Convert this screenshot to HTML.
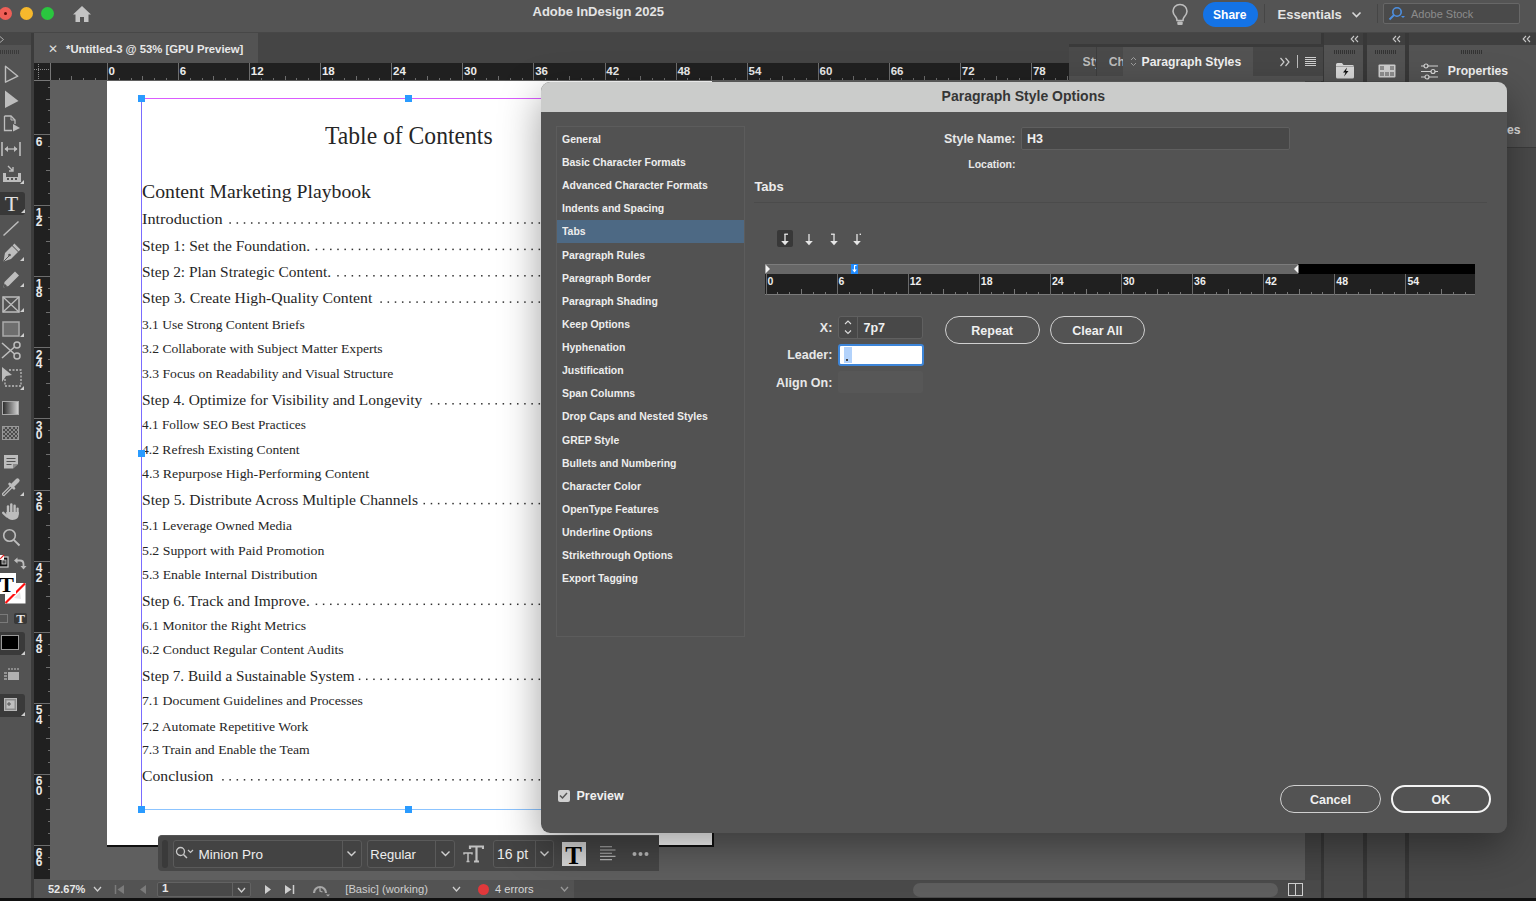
<!DOCTYPE html>
<html><head><meta charset="utf-8">
<style>
*{margin:0;padding:0;box-sizing:border-box}
html,body{width:1536px;height:901px;overflow:hidden;background:#545454;font-family:"Liberation Sans",sans-serif;color:#eee}
.a{position:absolute}
.t{position:absolute;white-space:nowrap;line-height:1}
.ui{font-family:"Liberation Sans",sans-serif}
.serif{font-family:"Liberation Serif",serif;color:#262626}
</style></head><body>
<!-- title bar -->
<div class="a" style="left:0;top:0;width:1536px;height:33px;background:#545454"></div>
<div class="a" style="left:-1px;top:7px;width:13px;height:13px;border-radius:50%;background:#ee5f57"></div>
<div class="a" style="left:4px;top:12px;width:3px;height:3px;border-radius:50%;background:#5a0a06"></div>
<div class="a" style="left:20px;top:7px;width:13px;height:13px;border-radius:50%;background:#f6b92c"></div>
<div class="a" style="left:41px;top:7px;width:13px;height:13px;border-radius:50%;background:#2ac63f"></div>
<svg class="a" style="left:72px;top:5px" width="20" height="18" viewBox="0 0 20 18"><path d="M10 1 L1 9.5 H3.5 V17 H8 V12 H12 V17 H16.5 V9.5 H19 Z" fill="#c4c4c4"/></svg>
<div class="t" style="left:532.5px;top:5.2px;font-size:13px;font-weight:bold;color:#e4e4e4">Adobe InDesign 2025</div>

<!-- tab row -->
<div class="a" style="left:0;top:32px;width:1536px;height:1px;background:#474747"></div>
<div class="a" style="left:0;top:33px;width:1536px;height:30px;background:#454545"></div>
<div class="a" style="left:34px;top:33px;width:224px;height:30px;background:#535353"></div>
<div class="t" style="left:47.5px;top:43px;font-size:12px;color:#ddd">&#x2715;</div>
<div class="t" style="left:66px;top:43.5px;font-size:11.3px;font-weight:bold;color:#e8e8e8">*Untitled-3 @ 53% [GPU Preview]</div>
<!-- left toolbar -->
<div class="a" style="left:0;top:33px;width:31px;height:868px;background:#535353"></div>
<div class="a" style="left:0;top:33px;width:31px;height:12px;background:#474747"></div>
<div class="a" style="left:31px;top:33px;width:3px;height:868px;background:#3c3c3c"></div>
<!-- pasteboard -->
<div class="a" style="left:50px;top:80px;width:1273px;height:800px;background:#5f5f5f"></div>
<!-- rulers -->
<div class="a" style="left:34px;top:63px;width:1035px;height:17px;background:#202020"></div>
<div class="a" style="left:34px;top:63px;width:16px;height:816px;background:#202020"></div>
<div class="a" style="left:50px;top:63px;width:1px;height:17px;background:#777"></div>
<div class="a" style="left:34px;top:80px;width:16px;height:1px;background:#777"></div>
<!-- tools -->
<svg class="a" style="left:0px;top:36px" width="6" height="7" viewBox="0 0 6 7"><path d="M0 0.5 L3.5 3.5 L0 6.5" stroke="#aaa" stroke-width="1" fill="none"/></svg>
<div class="a" style="left:0px;top:50px;width:20px;height:4px;background:repeating-linear-gradient(to right,#3a3a3a 0 1px,transparent 1px 2px)"></div>
<svg class="a" style="left:4px;top:65px" width="16" height="19" viewBox="0 0 16 19"><path d="M1.5 1.2 L13.8 11.2 L1.5 17.2 Z" stroke="#bdbdbd" stroke-width="1.4" fill="none" stroke-linejoin="round"/></svg>
<svg class="a" style="left:4px;top:90px" width="16" height="19" viewBox="0 0 16 19"><path d="M1 0.5 L14.5 11 L1 18 Z" fill="#bdbdbd"/></svg>
<svg class="a" style="left:3px;top:115px" width="18" height="17" viewBox="0 0 18 17"><path d="M1.5 1 H8 L12 5 V9 M1.5 1 V15.5 H9" stroke="#bdbdbd" stroke-width="1.3" fill="none"/><path d="M8 1 V5 H12" stroke="#bdbdbd" stroke-width="1" fill="none"/><path d="M10 9 L17 13 L10 16.5 Z" fill="#bdbdbd"/></svg>
<svg class="a" style="left:1px;top:141px" width="20" height="16" viewBox="0 0 20 16"><path d="M1 1 V15 M19 1 V15" stroke="#bdbdbd" stroke-width="1.6"/><path d="M4 8 H16" stroke="#bdbdbd" stroke-width="1.3"/><path d="M3.5 8 L7 5 V11 Z M16.5 8 L13 5 V11 Z" fill="#bdbdbd"/></svg>
<svg class="a" style="left:2px;top:165px" width="22" height="19" viewBox="0 0 22 19"><path d="M6 1 L11 6 M11 2 V6 H7" stroke="#bdbdbd" stroke-width="1.4" fill="none"/><path d="M1 8 V17 H19 V8 H16 V12 H4 V8 Z" fill="#bdbdbd"/><rect x="5" y="13" width="2" height="2" fill="#535353"/><rect x="9" y="13" width="2" height="2" fill="#535353"/><rect x="13" y="13" width="2" height="2" fill="#535353"/></svg>
<svg class="a" style="left:20px;top:180px" width="4" height="4" viewBox="0 0 4 4"><path d="M4 0 V4 H0 Z" fill="#cfcfcf"/></svg>
<div class="a" style="left:0px;top:191.5px;width:25px;height:23px;background:#383838;border-radius:0 3px 3px 0"></div>
<div class="t" style="left:-288.5px;width:600px;text-align:center;top:192.6px;font-size:22px;font-family:'Liberation Serif',serif;color:#e0e0e0;">T</div>
<svg class="a" style="left:21px;top:209px" width="4" height="4" viewBox="0 0 4 4"><path d="M4 0 V4 H0 Z" fill="#cfcfcf"/></svg>
<svg class="a" style="left:2px;top:220px" width="18" height="17" viewBox="0 0 18 17"><path d="M1.5 15.5 L16.5 1.5" stroke="#bdbdbd" stroke-width="1.5"/></svg>
<svg class="a" style="left:2px;top:243px" width="19" height="20" viewBox="0 0 19 20"><path d="M1.5 18.5 L3 10 L10 3 L16 9 L9 16 Z" fill="#bdbdbd"/><path d="M11.5 1.5 L17.5 7.5" stroke="#bdbdbd" stroke-width="2.5"/><path d="M1.5 18.5 L7 13" stroke="#535353" stroke-width="1"/><circle cx="7.5" cy="12" r="1.3" fill="#535353"/></svg>
<svg class="a" style="left:20px;top:257px" width="4" height="4" viewBox="0 0 4 4"><path d="M4 0 V4 H0 Z" fill="#cfcfcf"/></svg>
<svg class="a" style="left:2px;top:269px" width="19" height="20" viewBox="0 0 19 20"><path d="M1.5 18.5 L2.5 13 L13 2.5 L17 6.5 L6.5 17 Z" fill="#bdbdbd"/><path d="M1.5 18.5 L2.5 14.5 L5.5 17.5 Z" fill="#535353"/></svg>
<svg class="a" style="left:20px;top:283px" width="4" height="4" viewBox="0 0 4 4"><path d="M4 0 V4 H0 Z" fill="#cfcfcf"/></svg>
<svg class="a" style="left:2px;top:296px" width="18" height="17" viewBox="0 0 18 17"><rect x="1" y="1" width="16" height="15" stroke="#bdbdbd" stroke-width="1.5" fill="none"/><path d="M1 1 L17 16 M17 1 L1 16" stroke="#bdbdbd" stroke-width="1.3"/></svg>
<svg class="a" style="left:20px;top:308px" width="4" height="4" viewBox="0 0 4 4"><path d="M4 0 V4 H0 Z" fill="#cfcfcf"/></svg>
<svg class="a" style="left:2px;top:321px" width="18" height="16" viewBox="0 0 18 16"><rect x="1" y="1" width="16" height="14" stroke="#aaa" stroke-width="1.5" fill="#6e6e6e"/></svg>
<svg class="a" style="left:20px;top:333px" width="4" height="4" viewBox="0 0 4 4"><path d="M4 0 V4 H0 Z" fill="#cfcfcf"/></svg>
<svg class="a" style="left:1px;top:341px" width="21" height="19" viewBox="0 0 21 19"><circle cx="16" cy="4" r="3" stroke="#bdbdbd" stroke-width="1.5" fill="none"/><circle cx="16" cy="15" r="3" stroke="#bdbdbd" stroke-width="1.5" fill="none"/><path d="M1 2 L13.5 13 M1 17 L13.5 6" stroke="#bdbdbd" stroke-width="1.6"/></svg>
<svg class="a" style="left:1px;top:366px" width="22" height="25" viewBox="0 0 22 25"><path d="M1 1 L11 9 L5 10 L1 16 Z" fill="#bdbdbd"/><path d="M8 4 H20 V20 H4 V13" stroke="#bdbdbd" stroke-width="1.3" stroke-dasharray="2 1.5" fill="none"/></svg>
<svg class="a" style="left:20px;top:386px" width="4" height="4" viewBox="0 0 4 4"><path d="M4 0 V4 H0 Z" fill="#cfcfcf"/></svg>
<div class="a" style="left:2px;top:401px;width:17px;height:14px;border:1px solid #aaa;background:linear-gradient(to right,#2e2e2e,#d0d0d0)"></div>
<div class="a" style="left:2px;top:426px;width:17px;height:14px;border:1px solid #9a9a9a;background:repeating-conic-gradient(#4a4a4a 0 25%,#8a8a8a 0 50%) 0 0/4px 4px"></div>
<svg class="a" style="left:3px;top:454px" width="16" height="15" viewBox="0 0 16 15"><path d="M1 1 H15 V10 L10 14.5 H1 Z" fill="#bdbdbd"/><path d="M3.5 4.5 H12.5 M3.5 7.5 H12.5 M3.5 10.5 H8.5" stroke="#535353" stroke-width="1.2"/><path d="M10 14.5 V10 H15" fill="#8a8a8a"/></svg>
<svg class="a" style="left:1px;top:477px" width="20" height="20" viewBox="0 0 20 20"><path d="M3.2 18.6 Q1.4 18.6 1.6 16.8 L10 8.4 L11.6 10 L3.2 18.4 Z" stroke="#bdbdbd" stroke-width="1.3" fill="none" stroke-linejoin="round"/><path d="M8.6 7 L13 11.4" stroke="#bdbdbd" stroke-width="2.6" stroke-linecap="round"/><path d="M12 8 L16.5 3.5" stroke="#bdbdbd" stroke-width="4.2" stroke-linecap="round"/></svg>
<svg class="a" style="left:20px;top:492px" width="4" height="4" viewBox="0 0 4 4"><path d="M4 0 V4 H0 Z" fill="#cfcfcf"/></svg>
<svg class="a" style="left:1px;top:502px" width="20" height="19" viewBox="0 0 20 19"><g stroke="#bdbdbd" stroke-linecap="round" fill="none"><path d="M7 11 V4.5" stroke-width="2.4"/><path d="M10.3 10.5 V2.5" stroke-width="2.4"/><path d="M13.6 10.5 V3.8" stroke-width="2.4"/><path d="M16.6 11.5 V6.5" stroke-width="2.2"/><path d="M6 14.5 L2.2 10.8" stroke-width="2.4"/></g><path d="M5.2 10 H17.8 V12.5 Q17.5 17.8 11.5 18 Q7.5 18 5.2 14 Z" fill="#bdbdbd"/></svg>
<svg class="a" style="left:2px;top:528px" width="19" height="19" viewBox="0 0 19 19"><circle cx="7.5" cy="7.5" r="5.8" stroke="#bdbdbd" stroke-width="1.6" fill="none"/><path d="M11.8 11.8 L17.5 17.5" stroke="#bdbdbd" stroke-width="1.9"/></svg>
<svg class="a" style="left:0px;top:554px" width="9" height="14" viewBox="0 0 9 14"><rect x="-2" y="3" width="10" height="10" fill="#111" stroke="#cfcfcf" stroke-width="1.2"/><rect x="-1" y="1" width="5" height="5" fill="#fff"/><path d="M-1 6 L4 1" stroke="#e02020" stroke-width="1.2"/><rect x="2" y="6" width="4" height="4" fill="#535353" stroke="#ccc" stroke-width="0.8"/></svg>
<svg class="a" style="left:14px;top:557px" width="13" height="13" viewBox="0 0 13 13"><path d="M2.5 3.5 H6 Q9.5 3.5 9.5 7 V9.5" stroke="#bdbdbd" stroke-width="1.8" fill="none"/><path d="M0 3.5 L3.5 0.5 V6.5 Z M9.5 12.5 L6.5 9 H12.5 Z" fill="#bdbdbd"/></svg>
<svg class="a" style="left:5px;top:582.5px" width="21" height="21" viewBox="0 0 21 21"><rect x="0" y="0" width="20.5" height="20.5" fill="#fff"/><path d="M0.5 20 L20 0.5" stroke="#ff1010" stroke-width="2.2"/><path d="M9 15 L15 9 L16 16 Z" fill="#e6e6e6"/></svg>
<div class="a" style="left:0px;top:573px;width:16px;height:21px;background:#fff;"></div>
<div class="t" style="left:-293.5px;width:600px;text-align:center;top:573.6px;font-size:22px;font-family:'Liberation Serif',serif;color:#000;font-weight:bold;">T</div>
<div class="a" style="left:-2px;top:614px;width:10px;height:9px;border:1.2px solid #7a7a7a"></div>
<div class="a" style="left:14px;top:613px;width:13px;height:11px;background:#383838;border-radius:2px"></div>
<div class="t" style="left:-279.5px;width:600px;text-align:center;top:612.1px;font-size:13px;font-weight:bold;font-family:'Liberation Serif',serif;color:#e8e8e8;">T</div>
<div class="a" style="left:0px;top:632px;width:25px;height:23px;background:#3a3a3a;border-radius:0 3px 3px 0"></div>
<div class="a" style="left:1px;top:635px;width:18px;height:15px;background:#000;border:1.5px solid #9a9a9a"></div>
<svg class="a" style="left:21px;top:651px" width="4" height="4" viewBox="0 0 4 4"><path d="M4 0 V4 H0 Z" fill="#cfcfcf"/></svg>
<svg class="a" style="left:3px;top:667px" width="17" height="13" viewBox="0 0 17 13"><path d="M1 6 H4 M1 9 H4 M1 12 H4" stroke="#aaa" stroke-width="1.3"/><rect x="5" y="5" width="11" height="8" fill="#b0b0b0"/><path d="M6 1 V3 M9 1 V3 M12 1 V3 M15 1 V3" stroke="#aaa" stroke-width="1.3"/></svg>
<div class="a" style="left:0px;top:693.5px;width:25px;height:23px;background:#3a3a3a;border-radius:0 3px 3px 0"></div>
<svg class="a" style="left:4px;top:698px" width="13" height="13" viewBox="0 0 13 13"><rect x="0.5" y="0.5" width="12" height="12" fill="#8e8e8e" stroke="#b8b8b8"/><rect x="2.5" y="2.5" width="8" height="8" fill="#c0c0c0"/><path d="M3 6 H7 M5 4 V8" stroke="#555" stroke-width="1"/></svg>
<svg class="a" style="left:21px;top:712px" width="4" height="4" viewBox="0 0 4 4"><path d="M4 0 V4 H0 Z" fill="#cfcfcf"/></svg>
<!-- /tools -->
<!-- frame2 -->
<svg class="a" style="left:1171px;top:3px" width="18" height="23" viewBox="0 0 18 23"><path d="M9 1.5 C4.8 1.5 2 4.6 2 8.3 C2 11 3.6 12.6 5 14.3 C5.8 15.3 6 16.2 6 17.5 H12 C12 16.2 12.2 15.3 13 14.3 C14.4 12.6 16 11 16 8.3 C16 4.6 13.2 1.5 9 1.5 Z" fill="none" stroke="#bdbdbd" stroke-width="1.6"/><rect x="6.3" y="18.6" width="5.4" height="3.4" rx="1" fill="#bdbdbd"/></svg>
<div class="a" style="left:1202.5px;top:1.5px;width:55px;height:25px;background:#1473e6;border-radius:12.5px"></div>
<div class="t" style="left:929.8px;width:600px;text-align:center;top:8.9px;font-size:12px;font-weight:bold;color:#ffffff;">Share</div>
<div class="a" style="left:1264px;top:4px;width:1px;height:19px;background:#464646;"></div>
<div class="t" style="left:1277.5px;top:8.1px;font-size:13px;font-weight:bold;color:#e4e4e4;">Essentials</div>
<svg class="a" style="left:1351px;top:11px" width="11" height="7"><path d="M1.5 1.5 L5.5 5.5 L9.5 1.5" stroke="#d8d8d8" stroke-width="1.6" fill="none"/></svg>
<div class="a" style="left:1376.5px;top:4px;width:1px;height:19px;background:#464646;"></div>
<div class="a" style="left:1383px;top:3px;width:137px;height:21px;border:1px solid #676767;border-radius:2px;background:#4a4a4a"></div>
<svg class="a" style="left:1387px;top:6px" width="20" height="15"><circle cx="10" cy="6" r="4.2" stroke="#4d8fe0" stroke-width="1.6" fill="none"/><path d="M7 9 L2.5 13.5" stroke="#4d8fe0" stroke-width="1.8"/><path d="M14 10 L16 12 L18 10 Z" fill="#4d8fe0"/></svg>
<div class="t" style="left:1411.0px;top:9.3px;font-size:11px;color:#8c8c8c;">Adobe Stock</div>
<div class="a" style="left:1321px;top:33px;width:215px;height:12px;background:#3f3f3f;"></div>
<div class="a" style="left:1305px;top:81px;width:17px;height:800px;background:#474747;"></div>
<div class="a" style="left:1321px;top:33px;width:3px;height:865px;background:#383838;"></div>
<div class="a" style="left:1324px;top:45px;width:39px;height:853px;background:#4b4b4b;"></div>
<div class="a" style="left:1363px;top:33px;width:4px;height:865px;background:#383838;"></div>
<div class="a" style="left:1367px;top:45px;width:38px;height:853px;background:#4b4b4b;"></div>
<div class="a" style="left:1405px;top:33px;width:4px;height:865px;background:#383838;"></div>
<div class="a" style="left:1409px;top:45px;width:127px;height:853px;background:#4a4a4a;"></div>
<div class="a" style="left:1324px;top:45px;width:39px;height:36px;background:#535353;"></div>
<div class="a" style="left:1367px;top:45px;width:38px;height:36px;background:#535353;"></div>
<div class="a" style="left:1409px;top:45px;width:127px;height:103px;background:#535353;"></div>
<div class="a" style="left:1409px;top:147px;width:127px;height:1px;background:#3c3c3c;"></div>
<svg class="a" style="left:1350px;top:35px" width="9" height="8"><path d="M4 1 L1.2 4 L4 7 M8 1 L5.2 4 L8 7" stroke="#c8c8c8" stroke-width="1.1" fill="none"/></svg>
<svg class="a" style="left:1392px;top:35px" width="9" height="8"><path d="M4 1 L1.2 4 L4 7 M8 1 L5.2 4 L8 7" stroke="#c8c8c8" stroke-width="1.1" fill="none"/></svg>
<svg class="a" style="left:1522px;top:35px" width="9" height="8"><path d="M4 1 L1.2 4 L4 7 M8 1 L5.2 4 L8 7" stroke="#c8c8c8" stroke-width="1.1" fill="none"/></svg>
<div class="a" style="left:1334px;top:50px;width:21px;height:4px;background:repeating-linear-gradient(to right,#333 0 1px,transparent 1px 2px)"></div>
<div class="a" style="left:1375px;top:50px;width:21px;height:4px;background:repeating-linear-gradient(to right,#333 0 1px,transparent 1px 2px)"></div>
<div class="a" style="left:1461px;top:50px;width:21px;height:4px;background:repeating-linear-gradient(to right,#333 0 1px,transparent 1px 2px)"></div>
<svg class="a" style="left:1335px;top:62px" width="20" height="17" viewBox="0 0 20 17"><path d="M1 2.5 Q1 1 2.5 1 H7 L8.5 3 H17.5 Q19 3 19 4.5 V15 Q19 16.5 17.5 16.5 H2.5 Q1 16.5 1 15 Z" fill="#d8d8d8"/><path d="M1 4.5 H19" stroke="#9a9a9a" stroke-width="0.8"/><path d="M12 5.5 L8 10.5 H10.5 L9 14.5 L13.5 9 H11 Z" fill="#111"/></svg>
<svg class="a" style="left:1378px;top:64px" width="18" height="14" viewBox="0 0 18 14"><rect x="0.5" y="0.5" width="17" height="13" rx="1" fill="#cfcfcf"/><rect x="2" y="2" width="4" height="4" fill="#8e8e8e"/><rect x="12" y="2" width="4" height="4" fill="#8e8e8e"/><rect x="2" y="8" width="4" height="4" fill="#8e8e8e"/><rect x="7" y="8" width="4" height="4" fill="#8e8e8e"/><rect x="12" y="8" width="4" height="4" fill="#8e8e8e"/></svg>
<svg class="a" style="left:1420px;top:63px" width="19" height="17" viewBox="0 0 19 17"><g stroke="#d6d6d6" stroke-width="1.2" fill="#535353"><path d="M1 3 H18 M1 8.5 H18 M1 14 H18"/><circle cx="6" cy="3" r="2"/><circle cx="13" cy="8.5" r="2"/><circle cx="7" cy="14" r="2"/></g></svg>
<div class="t" style="left:1447.8px;top:65.3px;font-size:12.2px;font-weight:bold;color:#f0f0f0;">Properties</div>
<div class="t" style="left:1507.0px;top:123.7px;font-size:12.2px;font-weight:bold;color:#e0e0e0;">es</div>
<div class="a" style="left:1069px;top:44px;width:254px;height:3px;background:#3a3a3a;"></div>
<div class="a" style="left:1069px;top:47px;width:254px;height:34px;background:#474747;"></div>
<div class="a" style="left:1069px;top:47px;width:27px;height:29px;background:#4a4a4a;"></div>
<div class="a" style="left:1096px;top:47px;width:1px;height:29px;background:#3e3e3e;"></div>
<div class="a" style="left:1097px;top:47px;width:26px;height:29px;background:#4a4a4a;"></div>
<div class="a" style="left:1123px;top:47px;width:130px;height:34px;background:#535353;"></div>
<div class="a" style="left:1069px;top:76px;width:254px;height:5px;background:#535353;"></div>
<div class="a" style="left:1082.5px;top:54px;width:13px;height:16px;overflow:hidden"><div class="t" style="left:0px;top:1.7px;font-size:12.2px;font-weight:bold;color:#bdbdbd;">Sty</div></div>
<div class="a" style="left:1108.8px;top:54px;width:14px;height:16px;overflow:hidden"><div class="t" style="left:0.0px;top:1.7px;font-size:12.2px;font-weight:bold;color:#bdbdbd;">Ch</div></div>
<svg class="a" style="left:1130px;top:56px" width="7" height="11"><path d="M1 4 L3.5 1.5 L6 4 M1 7 L3.5 9.5 L6 7" stroke="#a8a8a8" stroke-width="0.9" fill="none"/></svg>
<div class="t" style="left:1141.6px;top:55.7px;font-size:12.2px;font-weight:bold;color:#f0f0f0;">Paragraph Styles</div>
<svg class="a" style="left:1279px;top:57px" width="12" height="10"><path d="M1.5 1 L5 5 L1.5 9 M6.5 1 L10 5 L6.5 9" stroke="#cfcfcf" stroke-width="1.2" fill="none"/></svg>
<div class="a" style="left:1297px;top:55px;width:1px;height:13px;background:#bdbdbd;"></div>
<div class="a" style="left:1305px;top:57px;width:11px;height:9px;background:repeating-linear-gradient(to bottom,#cfcfcf 0 1px,transparent 1px 2px)"></div>
<div class="a" style="left:34px;top:880px;width:1271px;height:18px;background:#535353;"></div>
<div class="a" style="left:574px;top:880px;width:747px;height:18px;background:#4a4a4a;"></div>
<div class="a" style="left:0px;top:898px;width:1536px;height:3px;background:#111;"></div>
<div class="t" style="left:48.0px;top:884.2px;font-size:11px;font-weight:bold;color:#e8e8e8;">52.67%</div>
<svg class="a" style="left:93px;top:886px" width="9" height="6"><path d="M1 1 L4.5 5 L8 1" stroke="#cfcfcf" stroke-width="1.3" fill="none"/></svg>
<svg class="a" style="left:114px;top:884px" width="11" height="11"><path d="M1.5 1 V10" stroke="#7b7b7b" stroke-width="1.5"/><path d="M10 1 L3.5 5.5 L10 10 Z" fill="#7b7b7b"/></svg>
<svg class="a" style="left:139px;top:884px" width="8" height="11"><path d="M7 1 L1 5.5 L7 10 Z" fill="#7b7b7b"/></svg>
<div class="a" style="left:157px;top:881.5px;width:94px;height:15.5px;border:1px solid #626262;border-radius:2px;background:#494949"></div>
<div class="a" style="left:232px;top:882px;width:1px;height:14px;background:#626262;"></div>
<div class="t" style="left:162.0px;top:883.3px;font-size:11.5px;font-weight:bold;color:#e8e8e8;">1</div>
<svg class="a" style="left:236.5px;top:887px" width="9" height="6"><path d="M1 1 L4.5 5 L8 1" stroke="#cfcfcf" stroke-width="1.3" fill="none"/></svg>
<svg class="a" style="left:264px;top:884px" width="8" height="11"><path d="M1 1 L7 5.5 L1 10 Z" fill="#cfcfcf"/></svg>
<svg class="a" style="left:284px;top:884px" width="11" height="11"><path d="M1 1 L7.5 5.5 L1 10 Z" fill="#cfcfcf"/><path d="M9.5 1 V10" stroke="#cfcfcf" stroke-width="1.5"/></svg>
<svg class="a" style="left:311px;top:882px" width="19" height="15"><path d="M3 11 A6 6 0 1 1 15 11" stroke="#a8a8a8" stroke-width="2.2" fill="none"/><path d="M9 5 V9 L11.5 10" stroke="#a8a8a8" stroke-width="1.3" fill="none"/><path d="M15 12.5 L17 14.5 L19 12.5" fill="#a8a8a8"/></svg>
<div class="t" style="left:345.3px;top:883.5px;font-size:11.2px;color:#cfcfcf;">[Basic] (working)</div>
<svg class="a" style="left:452px;top:886px" width="9" height="6"><path d="M1 1 L4.5 5 L8 1" stroke="#cfcfcf" stroke-width="1.3" fill="none"/></svg>
<div class="a" style="left:477.5px;top:883.5px;width:11.5px;height:11.5px;border-radius:50%;background:#e0383b"></div>
<div class="t" style="left:495.0px;top:883.5px;font-size:11.2px;color:#d8d8d8;">4 errors</div>
<svg class="a" style="left:560px;top:886px" width="9" height="6"><path d="M1 1 L4.5 5 L8 1" stroke="#9a9a9a" stroke-width="1.3" fill="none"/></svg>
<div class="a" style="left:912.5px;top:882.5px;width:365px;height:14.5px;background:#5e5e5e;border-radius:7px"></div>
<div class="a" style="left:1287.5px;top:883px;width:15.5px;height:13px;border:1.5px solid #cfcfcf"></div>
<div class="a" style="left:1294.5px;top:883px;width:1.5px;height:13px;background:#cfcfcf;"></div>
<!-- /frame2 -->
<!-- page -->
<div class="a" style="left:107px;top:81px;width:605px;height:764px;background:#fff"></div>
<div class="a" style="left:107px;top:845px;width:607px;height:2px;background:#111"></div>
<div class="a" style="left:712px;top:83px;width:2px;height:764px;background:#111"></div>
<div class="t serif" style="left:325px;top:123.9px;font-size:24.5px;transform:scaleX(0.964);transform-origin:0 0">Table of Contents</div>
<div class="t serif" style="left:142px;top:182.4px;font-size:19px;transform:scaleX(1.038);transform-origin:0 0">Content Marketing Playbook</div>
<div class="t serif" style="left:142px;top:211.2px;font-size:15.5px;transform:scaleX(1.051);transform-origin:0 0">Introduction</div>
<div class="t serif" style="left:142px;top:237.6px;font-size:15.5px;transform:scaleX(0.998);transform-origin:0 0">Step 1: Set the Foundation.</div>
<div class="t serif" style="left:142px;top:264.0px;font-size:15.5px;transform:scaleX(0.991);transform-origin:0 0">Step 2: Plan Strategic Content.</div>
<div class="t serif" style="left:142px;top:290.3px;font-size:15.5px;transform:scaleX(1.015);transform-origin:0 0">Step 3. Create High-Quality Content</div>
<div class="t serif" style="left:142px;top:317.5px;font-size:13.2px;transform:scaleX(1.021);transform-origin:0 0">3.1 Use Strong Content Briefs</div>
<div class="t serif" style="left:142px;top:341.8px;font-size:13.2px;transform:scaleX(1.033);transform-origin:0 0">3.2 Collaborate with Subject Matter Experts</div>
<div class="t serif" style="left:142px;top:367.1px;font-size:13.2px;transform:scaleX(1.036);transform-origin:0 0">3.3 Focus on Readability and Visual Structure</div>
<div class="t serif" style="left:142px;top:392.0px;font-size:15.5px;transform:scaleX(0.995);transform-origin:0 0">Step 4. Optimize for Visibility and Longevity</div>
<div class="t serif" style="left:142px;top:418.3px;font-size:13.2px;transform:scaleX(1.005);transform-origin:0 0">4.1 Follow SEO Best Practices</div>
<div class="t serif" style="left:142px;top:442.7px;font-size:13.2px;transform:scaleX(1.029);transform-origin:0 0">4.2 Refresh Existing Content</div>
<div class="t serif" style="left:142px;top:467.1px;font-size:13.2px;transform:scaleX(1.054);transform-origin:0 0">4.3 Repurpose High-Performing Content</div>
<div class="t serif" style="left:142px;top:491.8px;font-size:15.5px;transform:scaleX(1.008);transform-origin:0 0">Step 5. Distribute Across Multiple Channels</div>
<div class="t serif" style="left:142px;top:519.2px;font-size:13.2px;transform:scaleX(1.019);transform-origin:0 0">5.1 Leverage Owned Media</div>
<div class="t serif" style="left:142px;top:543.6px;font-size:13.2px;transform:scaleX(1.048);transform-origin:0 0">5.2 Support with Paid Promotion</div>
<div class="t serif" style="left:142px;top:568.0px;font-size:13.2px;transform:scaleX(1.046);transform-origin:0 0">5.3 Enable Internal Distribution</div>
<div class="t serif" style="left:142px;top:592.5px;font-size:15.5px;transform:scaleX(0.994);transform-origin:0 0">Step 6. Track and Improve.</div>
<div class="t serif" style="left:142px;top:619.4px;font-size:13.2px;transform:scaleX(1.034);transform-origin:0 0">6.1 Monitor the Right Metrics</div>
<div class="t serif" style="left:142px;top:643.3px;font-size:13.2px;transform:scaleX(1.049);transform-origin:0 0">6.2 Conduct Regular Content Audits</div>
<div class="t serif" style="left:142px;top:667.5px;font-size:15.5px;transform:scaleX(0.979);transform-origin:0 0">Step 7. Build a Sustainable System</div>
<div class="t serif" style="left:142px;top:694.4px;font-size:13.2px;transform:scaleX(1.042);transform-origin:0 0">7.1 Document Guidelines and Processes</div>
<div class="t serif" style="left:142px;top:719.5px;font-size:13.2px;transform:scaleX(1.036);transform-origin:0 0">7.2 Automate Repetitive Work</div>
<div class="t serif" style="left:142px;top:743.3px;font-size:13.2px;transform:scaleX(1.039);transform-origin:0 0">7.3 Train and Enable the Team</div>
<div class="t serif" style="left:142px;top:768.0px;font-size:15.5px;transform:scaleX(1.012);transform-origin:0 0">Conclusion</div>
<svg class="a" style="left:0;top:0" width="541" height="901"><rect x="229.39" y="222.25" width="1.5" height="1.5" fill="#303030"/><rect x="236.58" y="222.25" width="1.5" height="1.5" fill="#303030"/><rect x="243.77" y="222.25" width="1.5" height="1.5" fill="#303030"/><rect x="250.96" y="222.25" width="1.5" height="1.5" fill="#303030"/><rect x="258.15" y="222.25" width="1.5" height="1.5" fill="#303030"/><rect x="265.34" y="222.25" width="1.5" height="1.5" fill="#303030"/><rect x="272.53" y="222.25" width="1.5" height="1.5" fill="#303030"/><rect x="279.72" y="222.25" width="1.5" height="1.5" fill="#303030"/><rect x="286.91" y="222.25" width="1.5" height="1.5" fill="#303030"/><rect x="294.10" y="222.25" width="1.5" height="1.5" fill="#303030"/><rect x="301.29" y="222.25" width="1.5" height="1.5" fill="#303030"/><rect x="308.48" y="222.25" width="1.5" height="1.5" fill="#303030"/><rect x="315.67" y="222.25" width="1.5" height="1.5" fill="#303030"/><rect x="322.86" y="222.25" width="1.5" height="1.5" fill="#303030"/><rect x="330.05" y="222.25" width="1.5" height="1.5" fill="#303030"/><rect x="337.24" y="222.25" width="1.5" height="1.5" fill="#303030"/><rect x="344.43" y="222.25" width="1.5" height="1.5" fill="#303030"/><rect x="351.62" y="222.25" width="1.5" height="1.5" fill="#303030"/><rect x="358.81" y="222.25" width="1.5" height="1.5" fill="#303030"/><rect x="366.00" y="222.25" width="1.5" height="1.5" fill="#303030"/><rect x="373.19" y="222.25" width="1.5" height="1.5" fill="#303030"/><rect x="380.38" y="222.25" width="1.5" height="1.5" fill="#303030"/><rect x="387.57" y="222.25" width="1.5" height="1.5" fill="#303030"/><rect x="394.76" y="222.25" width="1.5" height="1.5" fill="#303030"/><rect x="401.95" y="222.25" width="1.5" height="1.5" fill="#303030"/><rect x="409.14" y="222.25" width="1.5" height="1.5" fill="#303030"/><rect x="416.33" y="222.25" width="1.5" height="1.5" fill="#303030"/><rect x="423.52" y="222.25" width="1.5" height="1.5" fill="#303030"/><rect x="430.71" y="222.25" width="1.5" height="1.5" fill="#303030"/><rect x="437.90" y="222.25" width="1.5" height="1.5" fill="#303030"/><rect x="445.09" y="222.25" width="1.5" height="1.5" fill="#303030"/><rect x="452.28" y="222.25" width="1.5" height="1.5" fill="#303030"/><rect x="459.47" y="222.25" width="1.5" height="1.5" fill="#303030"/><rect x="466.66" y="222.25" width="1.5" height="1.5" fill="#303030"/><rect x="473.85" y="222.25" width="1.5" height="1.5" fill="#303030"/><rect x="481.04" y="222.25" width="1.5" height="1.5" fill="#303030"/><rect x="488.23" y="222.25" width="1.5" height="1.5" fill="#303030"/><rect x="495.42" y="222.25" width="1.5" height="1.5" fill="#303030"/><rect x="502.61" y="222.25" width="1.5" height="1.5" fill="#303030"/><rect x="509.80" y="222.25" width="1.5" height="1.5" fill="#303030"/><rect x="516.99" y="222.25" width="1.5" height="1.5" fill="#303030"/><rect x="524.18" y="222.25" width="1.5" height="1.5" fill="#303030"/><rect x="531.37" y="222.25" width="1.5" height="1.5" fill="#303030"/><rect x="538.56" y="222.25" width="1.5" height="1.5" fill="#303030"/><rect x="315.67" y="248.65" width="1.5" height="1.5" fill="#303030"/><rect x="322.86" y="248.65" width="1.5" height="1.5" fill="#303030"/><rect x="330.05" y="248.65" width="1.5" height="1.5" fill="#303030"/><rect x="337.24" y="248.65" width="1.5" height="1.5" fill="#303030"/><rect x="344.43" y="248.65" width="1.5" height="1.5" fill="#303030"/><rect x="351.62" y="248.65" width="1.5" height="1.5" fill="#303030"/><rect x="358.81" y="248.65" width="1.5" height="1.5" fill="#303030"/><rect x="366.00" y="248.65" width="1.5" height="1.5" fill="#303030"/><rect x="373.19" y="248.65" width="1.5" height="1.5" fill="#303030"/><rect x="380.38" y="248.65" width="1.5" height="1.5" fill="#303030"/><rect x="387.57" y="248.65" width="1.5" height="1.5" fill="#303030"/><rect x="394.76" y="248.65" width="1.5" height="1.5" fill="#303030"/><rect x="401.95" y="248.65" width="1.5" height="1.5" fill="#303030"/><rect x="409.14" y="248.65" width="1.5" height="1.5" fill="#303030"/><rect x="416.33" y="248.65" width="1.5" height="1.5" fill="#303030"/><rect x="423.52" y="248.65" width="1.5" height="1.5" fill="#303030"/><rect x="430.71" y="248.65" width="1.5" height="1.5" fill="#303030"/><rect x="437.90" y="248.65" width="1.5" height="1.5" fill="#303030"/><rect x="445.09" y="248.65" width="1.5" height="1.5" fill="#303030"/><rect x="452.28" y="248.65" width="1.5" height="1.5" fill="#303030"/><rect x="459.47" y="248.65" width="1.5" height="1.5" fill="#303030"/><rect x="466.66" y="248.65" width="1.5" height="1.5" fill="#303030"/><rect x="473.85" y="248.65" width="1.5" height="1.5" fill="#303030"/><rect x="481.04" y="248.65" width="1.5" height="1.5" fill="#303030"/><rect x="488.23" y="248.65" width="1.5" height="1.5" fill="#303030"/><rect x="495.42" y="248.65" width="1.5" height="1.5" fill="#303030"/><rect x="502.61" y="248.65" width="1.5" height="1.5" fill="#303030"/><rect x="509.80" y="248.65" width="1.5" height="1.5" fill="#303030"/><rect x="516.99" y="248.65" width="1.5" height="1.5" fill="#303030"/><rect x="524.18" y="248.65" width="1.5" height="1.5" fill="#303030"/><rect x="531.37" y="248.65" width="1.5" height="1.5" fill="#303030"/><rect x="538.56" y="248.65" width="1.5" height="1.5" fill="#303030"/><rect x="337.24" y="275.05" width="1.5" height="1.5" fill="#303030"/><rect x="344.43" y="275.05" width="1.5" height="1.5" fill="#303030"/><rect x="351.62" y="275.05" width="1.5" height="1.5" fill="#303030"/><rect x="358.81" y="275.05" width="1.5" height="1.5" fill="#303030"/><rect x="366.00" y="275.05" width="1.5" height="1.5" fill="#303030"/><rect x="373.19" y="275.05" width="1.5" height="1.5" fill="#303030"/><rect x="380.38" y="275.05" width="1.5" height="1.5" fill="#303030"/><rect x="387.57" y="275.05" width="1.5" height="1.5" fill="#303030"/><rect x="394.76" y="275.05" width="1.5" height="1.5" fill="#303030"/><rect x="401.95" y="275.05" width="1.5" height="1.5" fill="#303030"/><rect x="409.14" y="275.05" width="1.5" height="1.5" fill="#303030"/><rect x="416.33" y="275.05" width="1.5" height="1.5" fill="#303030"/><rect x="423.52" y="275.05" width="1.5" height="1.5" fill="#303030"/><rect x="430.71" y="275.05" width="1.5" height="1.5" fill="#303030"/><rect x="437.90" y="275.05" width="1.5" height="1.5" fill="#303030"/><rect x="445.09" y="275.05" width="1.5" height="1.5" fill="#303030"/><rect x="452.28" y="275.05" width="1.5" height="1.5" fill="#303030"/><rect x="459.47" y="275.05" width="1.5" height="1.5" fill="#303030"/><rect x="466.66" y="275.05" width="1.5" height="1.5" fill="#303030"/><rect x="473.85" y="275.05" width="1.5" height="1.5" fill="#303030"/><rect x="481.04" y="275.05" width="1.5" height="1.5" fill="#303030"/><rect x="488.23" y="275.05" width="1.5" height="1.5" fill="#303030"/><rect x="495.42" y="275.05" width="1.5" height="1.5" fill="#303030"/><rect x="502.61" y="275.05" width="1.5" height="1.5" fill="#303030"/><rect x="509.80" y="275.05" width="1.5" height="1.5" fill="#303030"/><rect x="516.99" y="275.05" width="1.5" height="1.5" fill="#303030"/><rect x="524.18" y="275.05" width="1.5" height="1.5" fill="#303030"/><rect x="531.37" y="275.05" width="1.5" height="1.5" fill="#303030"/><rect x="538.56" y="275.05" width="1.5" height="1.5" fill="#303030"/><rect x="380.38" y="301.35" width="1.5" height="1.5" fill="#303030"/><rect x="387.57" y="301.35" width="1.5" height="1.5" fill="#303030"/><rect x="394.76" y="301.35" width="1.5" height="1.5" fill="#303030"/><rect x="401.95" y="301.35" width="1.5" height="1.5" fill="#303030"/><rect x="409.14" y="301.35" width="1.5" height="1.5" fill="#303030"/><rect x="416.33" y="301.35" width="1.5" height="1.5" fill="#303030"/><rect x="423.52" y="301.35" width="1.5" height="1.5" fill="#303030"/><rect x="430.71" y="301.35" width="1.5" height="1.5" fill="#303030"/><rect x="437.90" y="301.35" width="1.5" height="1.5" fill="#303030"/><rect x="445.09" y="301.35" width="1.5" height="1.5" fill="#303030"/><rect x="452.28" y="301.35" width="1.5" height="1.5" fill="#303030"/><rect x="459.47" y="301.35" width="1.5" height="1.5" fill="#303030"/><rect x="466.66" y="301.35" width="1.5" height="1.5" fill="#303030"/><rect x="473.85" y="301.35" width="1.5" height="1.5" fill="#303030"/><rect x="481.04" y="301.35" width="1.5" height="1.5" fill="#303030"/><rect x="488.23" y="301.35" width="1.5" height="1.5" fill="#303030"/><rect x="495.42" y="301.35" width="1.5" height="1.5" fill="#303030"/><rect x="502.61" y="301.35" width="1.5" height="1.5" fill="#303030"/><rect x="509.80" y="301.35" width="1.5" height="1.5" fill="#303030"/><rect x="516.99" y="301.35" width="1.5" height="1.5" fill="#303030"/><rect x="524.18" y="301.35" width="1.5" height="1.5" fill="#303030"/><rect x="531.37" y="301.35" width="1.5" height="1.5" fill="#303030"/><rect x="538.56" y="301.35" width="1.5" height="1.5" fill="#303030"/><rect x="430.71" y="403.05" width="1.5" height="1.5" fill="#303030"/><rect x="437.90" y="403.05" width="1.5" height="1.5" fill="#303030"/><rect x="445.09" y="403.05" width="1.5" height="1.5" fill="#303030"/><rect x="452.28" y="403.05" width="1.5" height="1.5" fill="#303030"/><rect x="459.47" y="403.05" width="1.5" height="1.5" fill="#303030"/><rect x="466.66" y="403.05" width="1.5" height="1.5" fill="#303030"/><rect x="473.85" y="403.05" width="1.5" height="1.5" fill="#303030"/><rect x="481.04" y="403.05" width="1.5" height="1.5" fill="#303030"/><rect x="488.23" y="403.05" width="1.5" height="1.5" fill="#303030"/><rect x="495.42" y="403.05" width="1.5" height="1.5" fill="#303030"/><rect x="502.61" y="403.05" width="1.5" height="1.5" fill="#303030"/><rect x="509.80" y="403.05" width="1.5" height="1.5" fill="#303030"/><rect x="516.99" y="403.05" width="1.5" height="1.5" fill="#303030"/><rect x="524.18" y="403.05" width="1.5" height="1.5" fill="#303030"/><rect x="531.37" y="403.05" width="1.5" height="1.5" fill="#303030"/><rect x="538.56" y="403.05" width="1.5" height="1.5" fill="#303030"/><rect x="423.52" y="502.85" width="1.5" height="1.5" fill="#303030"/><rect x="430.71" y="502.85" width="1.5" height="1.5" fill="#303030"/><rect x="437.90" y="502.85" width="1.5" height="1.5" fill="#303030"/><rect x="445.09" y="502.85" width="1.5" height="1.5" fill="#303030"/><rect x="452.28" y="502.85" width="1.5" height="1.5" fill="#303030"/><rect x="459.47" y="502.85" width="1.5" height="1.5" fill="#303030"/><rect x="466.66" y="502.85" width="1.5" height="1.5" fill="#303030"/><rect x="473.85" y="502.85" width="1.5" height="1.5" fill="#303030"/><rect x="481.04" y="502.85" width="1.5" height="1.5" fill="#303030"/><rect x="488.23" y="502.85" width="1.5" height="1.5" fill="#303030"/><rect x="495.42" y="502.85" width="1.5" height="1.5" fill="#303030"/><rect x="502.61" y="502.85" width="1.5" height="1.5" fill="#303030"/><rect x="509.80" y="502.85" width="1.5" height="1.5" fill="#303030"/><rect x="516.99" y="502.85" width="1.5" height="1.5" fill="#303030"/><rect x="524.18" y="502.85" width="1.5" height="1.5" fill="#303030"/><rect x="531.37" y="502.85" width="1.5" height="1.5" fill="#303030"/><rect x="538.56" y="502.85" width="1.5" height="1.5" fill="#303030"/><rect x="315.67" y="603.55" width="1.5" height="1.5" fill="#303030"/><rect x="322.86" y="603.55" width="1.5" height="1.5" fill="#303030"/><rect x="330.05" y="603.55" width="1.5" height="1.5" fill="#303030"/><rect x="337.24" y="603.55" width="1.5" height="1.5" fill="#303030"/><rect x="344.43" y="603.55" width="1.5" height="1.5" fill="#303030"/><rect x="351.62" y="603.55" width="1.5" height="1.5" fill="#303030"/><rect x="358.81" y="603.55" width="1.5" height="1.5" fill="#303030"/><rect x="366.00" y="603.55" width="1.5" height="1.5" fill="#303030"/><rect x="373.19" y="603.55" width="1.5" height="1.5" fill="#303030"/><rect x="380.38" y="603.55" width="1.5" height="1.5" fill="#303030"/><rect x="387.57" y="603.55" width="1.5" height="1.5" fill="#303030"/><rect x="394.76" y="603.55" width="1.5" height="1.5" fill="#303030"/><rect x="401.95" y="603.55" width="1.5" height="1.5" fill="#303030"/><rect x="409.14" y="603.55" width="1.5" height="1.5" fill="#303030"/><rect x="416.33" y="603.55" width="1.5" height="1.5" fill="#303030"/><rect x="423.52" y="603.55" width="1.5" height="1.5" fill="#303030"/><rect x="430.71" y="603.55" width="1.5" height="1.5" fill="#303030"/><rect x="437.90" y="603.55" width="1.5" height="1.5" fill="#303030"/><rect x="445.09" y="603.55" width="1.5" height="1.5" fill="#303030"/><rect x="452.28" y="603.55" width="1.5" height="1.5" fill="#303030"/><rect x="459.47" y="603.55" width="1.5" height="1.5" fill="#303030"/><rect x="466.66" y="603.55" width="1.5" height="1.5" fill="#303030"/><rect x="473.85" y="603.55" width="1.5" height="1.5" fill="#303030"/><rect x="481.04" y="603.55" width="1.5" height="1.5" fill="#303030"/><rect x="488.23" y="603.55" width="1.5" height="1.5" fill="#303030"/><rect x="495.42" y="603.55" width="1.5" height="1.5" fill="#303030"/><rect x="502.61" y="603.55" width="1.5" height="1.5" fill="#303030"/><rect x="509.80" y="603.55" width="1.5" height="1.5" fill="#303030"/><rect x="516.99" y="603.55" width="1.5" height="1.5" fill="#303030"/><rect x="524.18" y="603.55" width="1.5" height="1.5" fill="#303030"/><rect x="531.37" y="603.55" width="1.5" height="1.5" fill="#303030"/><rect x="538.56" y="603.55" width="1.5" height="1.5" fill="#303030"/><rect x="358.81" y="678.55" width="1.5" height="1.5" fill="#303030"/><rect x="366.00" y="678.55" width="1.5" height="1.5" fill="#303030"/><rect x="373.19" y="678.55" width="1.5" height="1.5" fill="#303030"/><rect x="380.38" y="678.55" width="1.5" height="1.5" fill="#303030"/><rect x="387.57" y="678.55" width="1.5" height="1.5" fill="#303030"/><rect x="394.76" y="678.55" width="1.5" height="1.5" fill="#303030"/><rect x="401.95" y="678.55" width="1.5" height="1.5" fill="#303030"/><rect x="409.14" y="678.55" width="1.5" height="1.5" fill="#303030"/><rect x="416.33" y="678.55" width="1.5" height="1.5" fill="#303030"/><rect x="423.52" y="678.55" width="1.5" height="1.5" fill="#303030"/><rect x="430.71" y="678.55" width="1.5" height="1.5" fill="#303030"/><rect x="437.90" y="678.55" width="1.5" height="1.5" fill="#303030"/><rect x="445.09" y="678.55" width="1.5" height="1.5" fill="#303030"/><rect x="452.28" y="678.55" width="1.5" height="1.5" fill="#303030"/><rect x="459.47" y="678.55" width="1.5" height="1.5" fill="#303030"/><rect x="466.66" y="678.55" width="1.5" height="1.5" fill="#303030"/><rect x="473.85" y="678.55" width="1.5" height="1.5" fill="#303030"/><rect x="481.04" y="678.55" width="1.5" height="1.5" fill="#303030"/><rect x="488.23" y="678.55" width="1.5" height="1.5" fill="#303030"/><rect x="495.42" y="678.55" width="1.5" height="1.5" fill="#303030"/><rect x="502.61" y="678.55" width="1.5" height="1.5" fill="#303030"/><rect x="509.80" y="678.55" width="1.5" height="1.5" fill="#303030"/><rect x="516.99" y="678.55" width="1.5" height="1.5" fill="#303030"/><rect x="524.18" y="678.55" width="1.5" height="1.5" fill="#303030"/><rect x="531.37" y="678.55" width="1.5" height="1.5" fill="#303030"/><rect x="538.56" y="678.55" width="1.5" height="1.5" fill="#303030"/><rect x="222.20" y="779.05" width="1.5" height="1.5" fill="#303030"/><rect x="229.39" y="779.05" width="1.5" height="1.5" fill="#303030"/><rect x="236.58" y="779.05" width="1.5" height="1.5" fill="#303030"/><rect x="243.77" y="779.05" width="1.5" height="1.5" fill="#303030"/><rect x="250.96" y="779.05" width="1.5" height="1.5" fill="#303030"/><rect x="258.15" y="779.05" width="1.5" height="1.5" fill="#303030"/><rect x="265.34" y="779.05" width="1.5" height="1.5" fill="#303030"/><rect x="272.53" y="779.05" width="1.5" height="1.5" fill="#303030"/><rect x="279.72" y="779.05" width="1.5" height="1.5" fill="#303030"/><rect x="286.91" y="779.05" width="1.5" height="1.5" fill="#303030"/><rect x="294.10" y="779.05" width="1.5" height="1.5" fill="#303030"/><rect x="301.29" y="779.05" width="1.5" height="1.5" fill="#303030"/><rect x="308.48" y="779.05" width="1.5" height="1.5" fill="#303030"/><rect x="315.67" y="779.05" width="1.5" height="1.5" fill="#303030"/><rect x="322.86" y="779.05" width="1.5" height="1.5" fill="#303030"/><rect x="330.05" y="779.05" width="1.5" height="1.5" fill="#303030"/><rect x="337.24" y="779.05" width="1.5" height="1.5" fill="#303030"/><rect x="344.43" y="779.05" width="1.5" height="1.5" fill="#303030"/><rect x="351.62" y="779.05" width="1.5" height="1.5" fill="#303030"/><rect x="358.81" y="779.05" width="1.5" height="1.5" fill="#303030"/><rect x="366.00" y="779.05" width="1.5" height="1.5" fill="#303030"/><rect x="373.19" y="779.05" width="1.5" height="1.5" fill="#303030"/><rect x="380.38" y="779.05" width="1.5" height="1.5" fill="#303030"/><rect x="387.57" y="779.05" width="1.5" height="1.5" fill="#303030"/><rect x="394.76" y="779.05" width="1.5" height="1.5" fill="#303030"/><rect x="401.95" y="779.05" width="1.5" height="1.5" fill="#303030"/><rect x="409.14" y="779.05" width="1.5" height="1.5" fill="#303030"/><rect x="416.33" y="779.05" width="1.5" height="1.5" fill="#303030"/><rect x="423.52" y="779.05" width="1.5" height="1.5" fill="#303030"/><rect x="430.71" y="779.05" width="1.5" height="1.5" fill="#303030"/><rect x="437.90" y="779.05" width="1.5" height="1.5" fill="#303030"/><rect x="445.09" y="779.05" width="1.5" height="1.5" fill="#303030"/><rect x="452.28" y="779.05" width="1.5" height="1.5" fill="#303030"/><rect x="459.47" y="779.05" width="1.5" height="1.5" fill="#303030"/><rect x="466.66" y="779.05" width="1.5" height="1.5" fill="#303030"/><rect x="473.85" y="779.05" width="1.5" height="1.5" fill="#303030"/><rect x="481.04" y="779.05" width="1.5" height="1.5" fill="#303030"/><rect x="488.23" y="779.05" width="1.5" height="1.5" fill="#303030"/><rect x="495.42" y="779.05" width="1.5" height="1.5" fill="#303030"/><rect x="502.61" y="779.05" width="1.5" height="1.5" fill="#303030"/><rect x="509.80" y="779.05" width="1.5" height="1.5" fill="#303030"/><rect x="516.99" y="779.05" width="1.5" height="1.5" fill="#303030"/><rect x="524.18" y="779.05" width="1.5" height="1.5" fill="#303030"/><rect x="531.37" y="779.05" width="1.5" height="1.5" fill="#303030"/><rect x="538.56" y="779.05" width="1.5" height="1.5" fill="#303030"/></svg>
<!-- text frame -->
<div class="a" style="left:141px;top:98px;width:400px;height:1px;background:#da5cff"></div>
<div class="a" style="left:141px;top:98px;width:1px;height:711px;background:#7a6cff"></div>
<div class="a" style="left:141px;top:809px;width:400px;height:1px;background:#8cc4ff"></div>
<div class="a" style="left:138px;top:95px;width:7px;height:7px;background:#2a9bff"></div>
<div class="a" style="left:405px;top:95px;width:7px;height:7px;background:#2a9bff"></div>
<div class="a" style="left:138px;top:450px;width:7px;height:7px;background:#2a9bff"></div>
<div class="a" style="left:138px;top:806px;width:7px;height:7px;background:#2a9bff"></div>
<div class="a" style="left:405px;top:806px;width:7px;height:7px;background:#2a9bff"></div>
<!-- dialog shadow on page -->


<div class="a" style="left:38px;top:64px;width:1px;height:16px;background:repeating-linear-gradient(to bottom,#8a8a8a 0 1px,transparent 1px 2px)"></div>
<div class="a" style="left:34px;top:69px;width:15px;height:1px;background:repeating-linear-gradient(to right,#8a8a8a 0 1px,transparent 1px 2px)"></div>
<!-- hruler ticks -->
<div class="a" style="left:59.4px;top:78px;width:1px;height:2px;background:#6e6e6e"></div>
<div class="a" style="left:71.2px;top:76px;width:1px;height:4px;background:#6e6e6e"></div>
<div class="a" style="left:83.1px;top:78px;width:1px;height:2px;background:#6e6e6e"></div>
<div class="a" style="left:95.0px;top:78px;width:1px;height:2px;background:#6e6e6e"></div>
<div class="a" style="left:106.8px;top:63px;width:1px;height:17px;background:#6e6e6e"></div>
<div class="t" style="left:108.6px;top:66px;font-size:11.5px;font-weight:bold;color:#ececec">0</div>
<div class="a" style="left:118.6px;top:78px;width:1px;height:2px;background:#6e6e6e"></div>
<div class="a" style="left:130.5px;top:78px;width:1px;height:2px;background:#6e6e6e"></div>
<div class="a" style="left:142.3px;top:76px;width:1px;height:4px;background:#6e6e6e"></div>
<div class="a" style="left:154.2px;top:78px;width:1px;height:2px;background:#6e6e6e"></div>
<div class="a" style="left:166.1px;top:78px;width:1px;height:2px;background:#6e6e6e"></div>
<div class="a" style="left:177.9px;top:63px;width:1px;height:17px;background:#6e6e6e"></div>
<div class="t" style="left:179.7px;top:66px;font-size:11.5px;font-weight:bold;color:#ececec">6</div>
<div class="a" style="left:189.7px;top:78px;width:1px;height:2px;background:#6e6e6e"></div>
<div class="a" style="left:201.6px;top:78px;width:1px;height:2px;background:#6e6e6e"></div>
<div class="a" style="left:213.4px;top:76px;width:1px;height:4px;background:#6e6e6e"></div>
<div class="a" style="left:225.3px;top:78px;width:1px;height:2px;background:#6e6e6e"></div>
<div class="a" style="left:237.1px;top:78px;width:1px;height:2px;background:#6e6e6e"></div>
<div class="a" style="left:249.0px;top:63px;width:1px;height:17px;background:#6e6e6e"></div>
<div class="t" style="left:250.8px;top:66px;font-size:11.5px;font-weight:bold;color:#ececec">12</div>
<div class="a" style="left:260.9px;top:78px;width:1px;height:2px;background:#6e6e6e"></div>
<div class="a" style="left:272.7px;top:78px;width:1px;height:2px;background:#6e6e6e"></div>
<div class="a" style="left:284.6px;top:76px;width:1px;height:4px;background:#6e6e6e"></div>
<div class="a" style="left:296.4px;top:78px;width:1px;height:2px;background:#6e6e6e"></div>
<div class="a" style="left:308.2px;top:78px;width:1px;height:2px;background:#6e6e6e"></div>
<div class="a" style="left:320.1px;top:63px;width:1px;height:17px;background:#6e6e6e"></div>
<div class="t" style="left:321.9px;top:66px;font-size:11.5px;font-weight:bold;color:#ececec">18</div>
<div class="a" style="left:331.9px;top:78px;width:1px;height:2px;background:#6e6e6e"></div>
<div class="a" style="left:343.8px;top:78px;width:1px;height:2px;background:#6e6e6e"></div>
<div class="a" style="left:355.6px;top:76px;width:1px;height:4px;background:#6e6e6e"></div>
<div class="a" style="left:367.5px;top:78px;width:1px;height:2px;background:#6e6e6e"></div>
<div class="a" style="left:379.3px;top:78px;width:1px;height:2px;background:#6e6e6e"></div>
<div class="a" style="left:391.2px;top:63px;width:1px;height:17px;background:#6e6e6e"></div>
<div class="t" style="left:393.0px;top:66px;font-size:11.5px;font-weight:bold;color:#ececec">24</div>
<div class="a" style="left:403.1px;top:78px;width:1px;height:2px;background:#6e6e6e"></div>
<div class="a" style="left:414.9px;top:78px;width:1px;height:2px;background:#6e6e6e"></div>
<div class="a" style="left:426.8px;top:76px;width:1px;height:4px;background:#6e6e6e"></div>
<div class="a" style="left:438.6px;top:78px;width:1px;height:2px;background:#6e6e6e"></div>
<div class="a" style="left:450.4px;top:78px;width:1px;height:2px;background:#6e6e6e"></div>
<div class="a" style="left:462.3px;top:63px;width:1px;height:17px;background:#6e6e6e"></div>
<div class="t" style="left:464.1px;top:66px;font-size:11.5px;font-weight:bold;color:#ececec">30</div>
<div class="a" style="left:474.2px;top:78px;width:1px;height:2px;background:#6e6e6e"></div>
<div class="a" style="left:486.0px;top:78px;width:1px;height:2px;background:#6e6e6e"></div>
<div class="a" style="left:497.9px;top:76px;width:1px;height:4px;background:#6e6e6e"></div>
<div class="a" style="left:509.7px;top:78px;width:1px;height:2px;background:#6e6e6e"></div>
<div class="a" style="left:521.5px;top:78px;width:1px;height:2px;background:#6e6e6e"></div>
<div class="a" style="left:533.4px;top:63px;width:1px;height:17px;background:#6e6e6e"></div>
<div class="t" style="left:535.2px;top:66px;font-size:11.5px;font-weight:bold;color:#ececec">36</div>
<div class="a" style="left:545.2px;top:78px;width:1px;height:2px;background:#6e6e6e"></div>
<div class="a" style="left:557.1px;top:78px;width:1px;height:2px;background:#6e6e6e"></div>
<div class="a" style="left:568.9px;top:76px;width:1px;height:4px;background:#6e6e6e"></div>
<div class="a" style="left:580.8px;top:78px;width:1px;height:2px;background:#6e6e6e"></div>
<div class="a" style="left:592.6px;top:78px;width:1px;height:2px;background:#6e6e6e"></div>
<div class="a" style="left:604.5px;top:63px;width:1px;height:17px;background:#6e6e6e"></div>
<div class="t" style="left:606.3px;top:66px;font-size:11.5px;font-weight:bold;color:#ececec">42</div>
<div class="a" style="left:616.3px;top:78px;width:1px;height:2px;background:#6e6e6e"></div>
<div class="a" style="left:628.2px;top:78px;width:1px;height:2px;background:#6e6e6e"></div>
<div class="a" style="left:640.0px;top:76px;width:1px;height:4px;background:#6e6e6e"></div>
<div class="a" style="left:651.9px;top:78px;width:1px;height:2px;background:#6e6e6e"></div>
<div class="a" style="left:663.7px;top:78px;width:1px;height:2px;background:#6e6e6e"></div>
<div class="a" style="left:675.6px;top:63px;width:1px;height:17px;background:#6e6e6e"></div>
<div class="t" style="left:677.4px;top:66px;font-size:11.5px;font-weight:bold;color:#ececec">48</div>
<div class="a" style="left:687.4px;top:78px;width:1px;height:2px;background:#6e6e6e"></div>
<div class="a" style="left:699.3px;top:78px;width:1px;height:2px;background:#6e6e6e"></div>
<div class="a" style="left:711.1px;top:76px;width:1px;height:4px;background:#6e6e6e"></div>
<div class="a" style="left:723.0px;top:78px;width:1px;height:2px;background:#6e6e6e"></div>
<div class="a" style="left:734.8px;top:78px;width:1px;height:2px;background:#6e6e6e"></div>
<div class="a" style="left:746.7px;top:63px;width:1px;height:17px;background:#6e6e6e"></div>
<div class="t" style="left:748.5px;top:66px;font-size:11.5px;font-weight:bold;color:#ececec">54</div>
<div class="a" style="left:758.5px;top:78px;width:1px;height:2px;background:#6e6e6e"></div>
<div class="a" style="left:770.4px;top:78px;width:1px;height:2px;background:#6e6e6e"></div>
<div class="a" style="left:782.2px;top:76px;width:1px;height:4px;background:#6e6e6e"></div>
<div class="a" style="left:794.1px;top:78px;width:1px;height:2px;background:#6e6e6e"></div>
<div class="a" style="left:805.9px;top:78px;width:1px;height:2px;background:#6e6e6e"></div>
<div class="a" style="left:817.8px;top:63px;width:1px;height:17px;background:#6e6e6e"></div>
<div class="t" style="left:819.6px;top:66px;font-size:11.5px;font-weight:bold;color:#ececec">60</div>
<div class="a" style="left:829.6px;top:78px;width:1px;height:2px;background:#6e6e6e"></div>
<div class="a" style="left:841.5px;top:78px;width:1px;height:2px;background:#6e6e6e"></div>
<div class="a" style="left:853.3px;top:76px;width:1px;height:4px;background:#6e6e6e"></div>
<div class="a" style="left:865.2px;top:78px;width:1px;height:2px;background:#6e6e6e"></div>
<div class="a" style="left:877.0px;top:78px;width:1px;height:2px;background:#6e6e6e"></div>
<div class="a" style="left:888.9px;top:63px;width:1px;height:17px;background:#6e6e6e"></div>
<div class="t" style="left:890.7px;top:66px;font-size:11.5px;font-weight:bold;color:#ececec">66</div>
<div class="a" style="left:900.7px;top:78px;width:1px;height:2px;background:#6e6e6e"></div>
<div class="a" style="left:912.6px;top:78px;width:1px;height:2px;background:#6e6e6e"></div>
<div class="a" style="left:924.4px;top:76px;width:1px;height:4px;background:#6e6e6e"></div>
<div class="a" style="left:936.3px;top:78px;width:1px;height:2px;background:#6e6e6e"></div>
<div class="a" style="left:948.1px;top:78px;width:1px;height:2px;background:#6e6e6e"></div>
<div class="a" style="left:960.0px;top:63px;width:1px;height:17px;background:#6e6e6e"></div>
<div class="t" style="left:961.8px;top:66px;font-size:11.5px;font-weight:bold;color:#ececec">72</div>
<div class="a" style="left:971.8px;top:78px;width:1px;height:2px;background:#6e6e6e"></div>
<div class="a" style="left:983.7px;top:78px;width:1px;height:2px;background:#6e6e6e"></div>
<div class="a" style="left:995.5px;top:76px;width:1px;height:4px;background:#6e6e6e"></div>
<div class="a" style="left:1007.4px;top:78px;width:1px;height:2px;background:#6e6e6e"></div>
<div class="a" style="left:1019.2px;top:78px;width:1px;height:2px;background:#6e6e6e"></div>
<div class="a" style="left:1031.1px;top:63px;width:1px;height:17px;background:#6e6e6e"></div>
<div class="t" style="left:1032.9px;top:66px;font-size:11.5px;font-weight:bold;color:#ececec">78</div>
<div class="a" style="left:1042.9px;top:78px;width:1px;height:2px;background:#6e6e6e"></div>
<div class="a" style="left:1054.8px;top:78px;width:1px;height:2px;background:#6e6e6e"></div>
<div class="a" style="left:1066.6px;top:76px;width:1px;height:4px;background:#6e6e6e"></div>
<div class="a" style="left:48px;top:86.6px;width:2px;height:1px;background:#6e6e6e"></div>
<div class="a" style="left:46px;top:98.5px;width:4px;height:1px;background:#6e6e6e"></div>
<div class="a" style="left:48px;top:110.3px;width:2px;height:1px;background:#6e6e6e"></div>
<div class="a" style="left:48px;top:122.2px;width:2px;height:1px;background:#6e6e6e"></div>
<div class="a" style="left:34px;top:134.0px;width:16px;height:1px;background:#6e6e6e"></div>
<div class="t" style="left:34.5px;top:137.5px;font-size:12px;font-weight:bold;color:#e8e8e8;line-height:9.6px;width:9px;text-align:center">6</div>
<div class="a" style="left:48px;top:145.8px;width:2px;height:1px;background:#6e6e6e"></div>
<div class="a" style="left:48px;top:157.7px;width:2px;height:1px;background:#6e6e6e"></div>
<div class="a" style="left:46px;top:169.6px;width:4px;height:1px;background:#6e6e6e"></div>
<div class="a" style="left:48px;top:181.4px;width:2px;height:1px;background:#6e6e6e"></div>
<div class="a" style="left:48px;top:193.2px;width:2px;height:1px;background:#6e6e6e"></div>
<div class="a" style="left:34px;top:205.1px;width:16px;height:1px;background:#6e6e6e"></div>
<div class="t" style="left:34.5px;top:208.6px;font-size:12px;font-weight:bold;color:#e8e8e8;line-height:9.6px;width:9px;text-align:center">1<br>2</div>
<div class="a" style="left:48px;top:216.9px;width:2px;height:1px;background:#6e6e6e"></div>
<div class="a" style="left:48px;top:228.8px;width:2px;height:1px;background:#6e6e6e"></div>
<div class="a" style="left:46px;top:240.6px;width:4px;height:1px;background:#6e6e6e"></div>
<div class="a" style="left:48px;top:252.5px;width:2px;height:1px;background:#6e6e6e"></div>
<div class="a" style="left:48px;top:264.4px;width:2px;height:1px;background:#6e6e6e"></div>
<div class="a" style="left:34px;top:276.2px;width:16px;height:1px;background:#6e6e6e"></div>
<div class="t" style="left:34.5px;top:279.7px;font-size:12px;font-weight:bold;color:#e8e8e8;line-height:9.6px;width:9px;text-align:center">1<br>8</div>
<div class="a" style="left:48px;top:288.1px;width:2px;height:1px;background:#6e6e6e"></div>
<div class="a" style="left:48px;top:299.9px;width:2px;height:1px;background:#6e6e6e"></div>
<div class="a" style="left:46px;top:311.8px;width:4px;height:1px;background:#6e6e6e"></div>
<div class="a" style="left:48px;top:323.6px;width:2px;height:1px;background:#6e6e6e"></div>
<div class="a" style="left:48px;top:335.4px;width:2px;height:1px;background:#6e6e6e"></div>
<div class="a" style="left:34px;top:347.3px;width:16px;height:1px;background:#6e6e6e"></div>
<div class="t" style="left:34.5px;top:350.8px;font-size:12px;font-weight:bold;color:#e8e8e8;line-height:9.6px;width:9px;text-align:center">2<br>4</div>
<div class="a" style="left:48px;top:359.1px;width:2px;height:1px;background:#6e6e6e"></div>
<div class="a" style="left:48px;top:371.0px;width:2px;height:1px;background:#6e6e6e"></div>
<div class="a" style="left:46px;top:382.8px;width:4px;height:1px;background:#6e6e6e"></div>
<div class="a" style="left:48px;top:394.7px;width:2px;height:1px;background:#6e6e6e"></div>
<div class="a" style="left:48px;top:406.5px;width:2px;height:1px;background:#6e6e6e"></div>
<div class="a" style="left:34px;top:418.4px;width:16px;height:1px;background:#6e6e6e"></div>
<div class="t" style="left:34.5px;top:421.9px;font-size:12px;font-weight:bold;color:#e8e8e8;line-height:9.6px;width:9px;text-align:center">3<br>0</div>
<div class="a" style="left:48px;top:430.2px;width:2px;height:1px;background:#6e6e6e"></div>
<div class="a" style="left:48px;top:442.1px;width:2px;height:1px;background:#6e6e6e"></div>
<div class="a" style="left:46px;top:453.9px;width:4px;height:1px;background:#6e6e6e"></div>
<div class="a" style="left:48px;top:465.8px;width:2px;height:1px;background:#6e6e6e"></div>
<div class="a" style="left:48px;top:477.6px;width:2px;height:1px;background:#6e6e6e"></div>
<div class="a" style="left:34px;top:489.5px;width:16px;height:1px;background:#6e6e6e"></div>
<div class="t" style="left:34.5px;top:493.0px;font-size:12px;font-weight:bold;color:#e8e8e8;line-height:9.6px;width:9px;text-align:center">3<br>6</div>
<div class="a" style="left:48px;top:501.4px;width:2px;height:1px;background:#6e6e6e"></div>
<div class="a" style="left:48px;top:513.2px;width:2px;height:1px;background:#6e6e6e"></div>
<div class="a" style="left:46px;top:525.0px;width:4px;height:1px;background:#6e6e6e"></div>
<div class="a" style="left:48px;top:536.9px;width:2px;height:1px;background:#6e6e6e"></div>
<div class="a" style="left:48px;top:548.8px;width:2px;height:1px;background:#6e6e6e"></div>
<div class="a" style="left:34px;top:560.6px;width:16px;height:1px;background:#6e6e6e"></div>
<div class="t" style="left:34.5px;top:564.1px;font-size:12px;font-weight:bold;color:#e8e8e8;line-height:9.6px;width:9px;text-align:center">4<br>2</div>
<div class="a" style="left:48px;top:572.4px;width:2px;height:1px;background:#6e6e6e"></div>
<div class="a" style="left:48px;top:584.3px;width:2px;height:1px;background:#6e6e6e"></div>
<div class="a" style="left:46px;top:596.1px;width:4px;height:1px;background:#6e6e6e"></div>
<div class="a" style="left:48px;top:608.0px;width:2px;height:1px;background:#6e6e6e"></div>
<div class="a" style="left:48px;top:619.8px;width:2px;height:1px;background:#6e6e6e"></div>
<div class="a" style="left:34px;top:631.7px;width:16px;height:1px;background:#6e6e6e"></div>
<div class="t" style="left:34.5px;top:635.2px;font-size:12px;font-weight:bold;color:#e8e8e8;line-height:9.6px;width:9px;text-align:center">4<br>8</div>
<div class="a" style="left:48px;top:643.5px;width:2px;height:1px;background:#6e6e6e"></div>
<div class="a" style="left:48px;top:655.4px;width:2px;height:1px;background:#6e6e6e"></div>
<div class="a" style="left:46px;top:667.2px;width:4px;height:1px;background:#6e6e6e"></div>
<div class="a" style="left:48px;top:679.1px;width:2px;height:1px;background:#6e6e6e"></div>
<div class="a" style="left:48px;top:690.9px;width:2px;height:1px;background:#6e6e6e"></div>
<div class="a" style="left:34px;top:702.8px;width:16px;height:1px;background:#6e6e6e"></div>
<div class="t" style="left:34.5px;top:706.3px;font-size:12px;font-weight:bold;color:#e8e8e8;line-height:9.6px;width:9px;text-align:center">5<br>4</div>
<div class="a" style="left:48px;top:714.6px;width:2px;height:1px;background:#6e6e6e"></div>
<div class="a" style="left:48px;top:726.5px;width:2px;height:1px;background:#6e6e6e"></div>
<div class="a" style="left:46px;top:738.3px;width:4px;height:1px;background:#6e6e6e"></div>
<div class="a" style="left:48px;top:750.2px;width:2px;height:1px;background:#6e6e6e"></div>
<div class="a" style="left:48px;top:762.0px;width:2px;height:1px;background:#6e6e6e"></div>
<div class="a" style="left:34px;top:773.9px;width:16px;height:1px;background:#6e6e6e"></div>
<div class="t" style="left:34.5px;top:777.4px;font-size:12px;font-weight:bold;color:#e8e8e8;line-height:9.6px;width:9px;text-align:center">6<br>0</div>
<div class="a" style="left:48px;top:785.8px;width:2px;height:1px;background:#6e6e6e"></div>
<div class="a" style="left:48px;top:797.6px;width:2px;height:1px;background:#6e6e6e"></div>
<div class="a" style="left:46px;top:809.4px;width:4px;height:1px;background:#6e6e6e"></div>
<div class="a" style="left:48px;top:821.3px;width:2px;height:1px;background:#6e6e6e"></div>
<div class="a" style="left:48px;top:833.1px;width:2px;height:1px;background:#6e6e6e"></div>
<div class="a" style="left:34px;top:845.0px;width:16px;height:1px;background:#6e6e6e"></div>
<div class="t" style="left:34.5px;top:848.5px;font-size:12px;font-weight:bold;color:#e8e8e8;line-height:9.6px;width:9px;text-align:center">6<br>6</div>
<div class="a" style="left:48px;top:856.8px;width:2px;height:1px;background:#6e6e6e"></div>
<div class="a" style="left:48px;top:868.7px;width:2px;height:1px;background:#6e6e6e"></div>
<!-- strip -->
<div class="a" style="left:157.5px;top:835px;width:501px;height:36px;background:#474747;border-radius:4px 0 0 4px;border-top:1px solid #555"></div>
<div class="a" style="left:161.5px;top:839.5px;width:6px;height:28px;background:#3a3a3a;border-radius:3px"></div>
<div class="a" style="left:173px;top:839.5px;width:189px;height:28.5px;background:#434343;border:1px solid #5a5a5a;border-radius:3px"></div>
<div class="a" style="left:342px;top:840px;width:1px;height:27.5px;background:#5a5a5a;"></div>
<svg class="a" style="left:175px;top:846px" width="20" height="14" viewBox="0 0 20 14"><circle cx="5.5" cy="5.5" r="4" stroke="#c8c8c8" stroke-width="1.3" fill="none"/><path d="M8.5 8.5 L12 12" stroke="#c8c8c8" stroke-width="1.5"/><path d="M13 4 L15.5 6.5 L18 4" stroke="#c8c8c8" stroke-width="1.2" fill="none"/></svg>
<div class="t" style="left:198.4px;top:847.8px;font-size:13.5px;color:#eeeeee;">Minion Pro</div>
<svg class="a" style="left:346px;top:850px" width="11" height="7"><path d="M1.5 1.5 L5.5 5.5 L9.5 1.5" stroke="#d0d0d0" stroke-width="1.4" fill="none"/></svg>
<div class="a" style="left:366.5px;top:839.5px;width:88px;height:28.5px;background:#434343;border:1px solid #5a5a5a;border-radius:3px"></div>
<div class="a" style="left:435px;top:840px;width:1px;height:27.5px;background:#5a5a5a;"></div>
<div class="t" style="left:370.3px;top:848.2px;font-size:13px;color:#eeeeee;">Regular</div>
<svg class="a" style="left:439.5px;top:850px" width="11" height="7"><path d="M1.5 1.5 L5.5 5.5 L9.5 1.5" stroke="#d0d0d0" stroke-width="1.4" fill="none"/></svg>
<svg class="a" style="left:463px;top:845px" width="21" height="18" viewBox="0 0 21 18"><path d="M1 9.5 V8 H9 V9.5 M5 8 V16.5 M3.5 16.5 H6.5" stroke="#c0c0c0" stroke-width="1.5" fill="none"/><path d="M7 4 V1.5 H20 V4 M13.5 1.5 V16.5 M11 16.5 H16" stroke="#c0c0c0" stroke-width="2.2" fill="none"/></svg>
<div class="a" style="left:492.5px;top:839.5px;width:61.5px;height:28.5px;background:#434343;border:1px solid #5a5a5a;border-radius:3px"></div>
<div class="a" style="left:535px;top:840px;width:1px;height:27.5px;background:#5a5a5a;"></div>
<div class="t" style="left:497.0px;top:847.3px;font-size:14px;color:#eeeeee;">16 pt</div>
<svg class="a" style="left:539px;top:850px" width="11" height="7"><path d="M1.5 1.5 L5.5 5.5 L9.5 1.5" stroke="#d0d0d0" stroke-width="1.4" fill="none"/></svg>
<div class="a" style="left:561.5px;top:842px;width:24px;height:23.5px;background:#d9d9d9;"></div>
<div class="t" style="left:273.5px;width:600px;text-align:center;top:842.6px;font-size:25px;font-weight:bold;font-family:'Liberation Serif',serif;color:#000;">T</div>
<svg class="a" style="left:598px;top:845px" width="19" height="17" viewBox="0 0 19 17"><path d="M2 1.8 H14 M2 5 H17.5 M2 8.2 H14 M2 11.4 H17.5 M2 14.6 H14" stroke="#b8b8b8" stroke-width="1.1"/></svg>
<svg class="a" style="left:632px;top:851px" width="18" height="6" viewBox="0 0 18 6"><circle cx="2.5" cy="3" r="2" fill="#bdbdbd"/><circle cx="8.5" cy="3" r="2" fill="#bdbdbd"/><circle cx="14.5" cy="3" r="2" fill="#bdbdbd"/></svg>
<!-- /strip -->
<!-- dialog -->
<div class="a" style="left:541px;top:82px;width:966px;height:751px;border-radius:9px;box-shadow:0 14px 40px rgba(0,0,0,0.38)"></div>
<div class="a" style="left:541px;top:82px;width:966px;height:751px;border-radius:9px;background:#535353;overflow:hidden">
<div class="a" style="left:0;top:0;width:966px;height:30px;background:#cbcccb"></div>
</div>
<div class="t" style="left:723.3px;width:600px;text-align:center;top:88.8px;font-size:14px;font-weight:bold;color:#363636;">Paragraph Style Options</div>
<div class="a" style="left:556px;top:126px;width:189px;height:511px;border:1px solid #5c5c5c;background:#525252"></div>
<div class="a" style="left:557px;top:220px;width:187px;height:23px;background:#4d6984;"></div>
<div class="t" style="left:561.8px;top:134.0px;font-size:11.5px;font-weight:bold;color:#ededed;transform:scaleX(0.909);transform-origin:0 0;">General</div>
<div class="t" style="left:561.8px;top:157.1px;font-size:11.5px;font-weight:bold;color:#ededed;transform:scaleX(0.909);transform-origin:0 0;">Basic Character Formats</div>
<div class="t" style="left:561.8px;top:180.2px;font-size:11.5px;font-weight:bold;color:#ededed;transform:scaleX(0.909);transform-origin:0 0;">Advanced Character Formats</div>
<div class="t" style="left:561.8px;top:203.3px;font-size:11.5px;font-weight:bold;color:#ededed;transform:scaleX(0.909);transform-origin:0 0;">Indents and Spacing</div>
<div class="t" style="left:561.8px;top:226.4px;font-size:11.5px;font-weight:bold;color:#ededed;transform:scaleX(0.909);transform-origin:0 0;">Tabs</div>
<div class="t" style="left:561.8px;top:249.6px;font-size:11.5px;font-weight:bold;color:#ededed;transform:scaleX(0.909);transform-origin:0 0;">Paragraph Rules</div>
<div class="t" style="left:561.8px;top:272.7px;font-size:11.5px;font-weight:bold;color:#ededed;transform:scaleX(0.909);transform-origin:0 0;">Paragraph Border</div>
<div class="t" style="left:561.8px;top:295.8px;font-size:11.5px;font-weight:bold;color:#ededed;transform:scaleX(0.909);transform-origin:0 0;">Paragraph Shading</div>
<div class="t" style="left:561.8px;top:318.9px;font-size:11.5px;font-weight:bold;color:#ededed;transform:scaleX(0.909);transform-origin:0 0;">Keep Options</div>
<div class="t" style="left:561.8px;top:342.0px;font-size:11.5px;font-weight:bold;color:#ededed;transform:scaleX(0.909);transform-origin:0 0;">Hyphenation</div>
<div class="t" style="left:561.8px;top:365.2px;font-size:11.5px;font-weight:bold;color:#ededed;transform:scaleX(0.909);transform-origin:0 0;">Justification</div>
<div class="t" style="left:561.8px;top:388.3px;font-size:11.5px;font-weight:bold;color:#ededed;transform:scaleX(0.909);transform-origin:0 0;">Span Columns</div>
<div class="t" style="left:561.8px;top:411.4px;font-size:11.5px;font-weight:bold;color:#ededed;transform:scaleX(0.909);transform-origin:0 0;">Drop Caps and Nested Styles</div>
<div class="t" style="left:561.8px;top:434.5px;font-size:11.5px;font-weight:bold;color:#ededed;transform:scaleX(0.909);transform-origin:0 0;">GREP Style</div>
<div class="t" style="left:561.8px;top:457.6px;font-size:11.5px;font-weight:bold;color:#ededed;transform:scaleX(0.909);transform-origin:0 0;">Bullets and Numbering</div>
<div class="t" style="left:561.8px;top:480.8px;font-size:11.5px;font-weight:bold;color:#ededed;transform:scaleX(0.909);transform-origin:0 0;">Character Color</div>
<div class="t" style="left:561.8px;top:503.9px;font-size:11.5px;font-weight:bold;color:#ededed;transform:scaleX(0.909);transform-origin:0 0;">OpenType Features</div>
<div class="t" style="left:561.8px;top:527.0px;font-size:11.5px;font-weight:bold;color:#ededed;transform:scaleX(0.909);transform-origin:0 0;">Underline Options</div>
<div class="t" style="left:561.8px;top:550.1px;font-size:11.5px;font-weight:bold;color:#ededed;transform:scaleX(0.909);transform-origin:0 0;">Strikethrough Options</div>
<div class="t" style="left:561.8px;top:573.2px;font-size:11.5px;font-weight:bold;color:#ededed;transform:scaleX(0.909);transform-origin:0 0;">Export Tagging</div>
<div class="t" style="right:520.5px;top:132.8px;font-size:12.5px;font-weight:bold;color:#e8e8e8;">Style Name:</div>
<div class="a" style="left:1021px;top:127px;width:269px;height:23px;background:#484848;border:1px solid #5f5f5f;border-radius:2px"></div>
<div class="t" style="left:1027.0px;top:132.8px;font-size:12.5px;font-weight:bold;color:#f0f0f0;">H3</div>
<div class="t" style="right:520.5px;top:159.2px;font-size:10.5px;font-weight:bold;color:#e8e8e8;">Location:</div>
<div class="t" style="left:754.4px;top:180.4px;font-size:13px;font-weight:bold;color:#ececec;">Tabs</div>
<div class="a" style="left:754px;top:202px;width:733px;height:1px;background:#4b4b4b;"></div>
<div class="a" style="left:777px;top:230px;width:16px;height:17px;background:#383838;border-radius:2px"></div>
<svg class="a" style="left:779px;top:233px" width="12" height="13" viewBox="0 0 12 13"><path d="M6 1 V9" stroke="#e6e6e6" stroke-width="1.3"/><path d="M2.2 8 L6 12.3 L9.8 8 Z" fill="#e6e6e6"/><path d="M5.4 1.2 H9" stroke="#e6e6e6" stroke-width="1.3"/></svg>
<svg class="a" style="left:802.5px;top:233px" width="12" height="13" viewBox="0 0 12 13"><path d="M6 1 V9" stroke="#e6e6e6" stroke-width="1.3"/><path d="M2.2 8 L6 12.3 L9.8 8 Z" fill="#e6e6e6"/></svg>
<svg class="a" style="left:827.5px;top:233px" width="12" height="13" viewBox="0 0 12 13"><path d="M6 1 V9" stroke="#e6e6e6" stroke-width="1.3"/><path d="M2.2 8 L6 12.3 L9.8 8 Z" fill="#e6e6e6"/><path d="M6.6 1.2 H3" stroke="#e6e6e6" stroke-width="1.3"/></svg>
<svg class="a" style="left:851px;top:233px" width="12" height="13" viewBox="0 0 12 13"><path d="M6 1 V9" stroke="#e6e6e6" stroke-width="1.3"/><path d="M2.2 8 L6 12.3 L9.8 8 Z" fill="#e6e6e6"/><rect x="8.6" y="0.6" width="1.4" height="1.4" fill="#e6e6e6"/></svg>
<div class="a" style="left:765px;top:264px;width:710px;height:10px;background:#676767;border-top:1px solid #7c7c7c"></div>
<div class="a" style="left:1298px;top:264px;width:177px;height:10px;background:#000;"></div>
<svg class="a" style="left:765px;top:264px" width="6" height="10"><path d="M0.5 0.5 L5 5 L0.5 9.5 Z" fill="#f2f2f2"/></svg>
<svg class="a" style="left:1293px;top:264px" width="6" height="10"><path d="M5.5 0.5 L1 5 L5.5 9.5 Z" fill="#f2f2f2"/></svg>
<div class="a" style="left:851px;top:264px;width:7px;height:10px;background:#1f8bff;"></div>
<svg class="a" style="left:851px;top:264px" width="7" height="10"><path d="M3.5 1.5 V6" stroke="#fff" stroke-width="1.1"/><path d="M1.2 5.5 L3.5 8.6 L5.8 5.5 Z" fill="#fff"/><path d="M3 1.6 H5.5" stroke="#fff" stroke-width="1"/></svg>
<div class="a" style="left:765px;top:274px;width:710px;height:21px;background:#202020;border-bottom:1px solid #7a7a7a"></div>
<div class="a" style="left:765.5px;top:274px;width:1px;height:21px;background:#6a6a6a;"></div>
<div class="t" style="left:767.5px;top:276.3px;font-size:10.5px;font-weight:bold;color:#eeeeee;">0</div>
<div class="a" style="left:777.4px;top:292px;width:1px;height:2px;background:#777;"></div>
<div class="a" style="left:789.2px;top:292px;width:1px;height:2px;background:#777;"></div>
<div class="a" style="left:801.0px;top:289px;width:1px;height:5px;background:#777;"></div>
<div class="a" style="left:812.9px;top:292px;width:1px;height:2px;background:#777;"></div>
<div class="a" style="left:824.8px;top:292px;width:1px;height:2px;background:#777;"></div>
<div class="a" style="left:836.6px;top:274px;width:1px;height:21px;background:#6a6a6a;"></div>
<div class="t" style="left:838.6px;top:276.3px;font-size:10.5px;font-weight:bold;color:#eeeeee;">6</div>
<div class="a" style="left:848.5px;top:292px;width:1px;height:2px;background:#777;"></div>
<div class="a" style="left:860.3px;top:292px;width:1px;height:2px;background:#777;"></div>
<div class="a" style="left:872.1px;top:289px;width:1px;height:5px;background:#777;"></div>
<div class="a" style="left:884.0px;top:292px;width:1px;height:2px;background:#777;"></div>
<div class="a" style="left:895.9px;top:292px;width:1px;height:2px;background:#777;"></div>
<div class="a" style="left:907.7px;top:274px;width:1px;height:21px;background:#6a6a6a;"></div>
<div class="t" style="left:909.7px;top:276.3px;font-size:10.5px;font-weight:bold;color:#eeeeee;">12</div>
<div class="a" style="left:919.6px;top:292px;width:1px;height:2px;background:#777;"></div>
<div class="a" style="left:931.4px;top:292px;width:1px;height:2px;background:#777;"></div>
<div class="a" style="left:943.2px;top:289px;width:1px;height:5px;background:#777;"></div>
<div class="a" style="left:955.1px;top:292px;width:1px;height:2px;background:#777;"></div>
<div class="a" style="left:967.0px;top:292px;width:1px;height:2px;background:#777;"></div>
<div class="a" style="left:978.8px;top:274px;width:1px;height:21px;background:#6a6a6a;"></div>
<div class="t" style="left:980.8px;top:276.3px;font-size:10.5px;font-weight:bold;color:#eeeeee;">18</div>
<div class="a" style="left:990.6px;top:292px;width:1px;height:2px;background:#777;"></div>
<div class="a" style="left:1002.5px;top:292px;width:1px;height:2px;background:#777;"></div>
<div class="a" style="left:1014.3px;top:289px;width:1px;height:5px;background:#777;"></div>
<div class="a" style="left:1026.2px;top:292px;width:1px;height:2px;background:#777;"></div>
<div class="a" style="left:1038.0px;top:292px;width:1px;height:2px;background:#777;"></div>
<div class="a" style="left:1049.9px;top:274px;width:1px;height:21px;background:#6a6a6a;"></div>
<div class="t" style="left:1051.9px;top:276.3px;font-size:10.5px;font-weight:bold;color:#eeeeee;">24</div>
<div class="a" style="left:1061.8px;top:292px;width:1px;height:2px;background:#777;"></div>
<div class="a" style="left:1073.6px;top:292px;width:1px;height:2px;background:#777;"></div>
<div class="a" style="left:1085.5px;top:289px;width:1px;height:5px;background:#777;"></div>
<div class="a" style="left:1097.3px;top:292px;width:1px;height:2px;background:#777;"></div>
<div class="a" style="left:1109.2px;top:292px;width:1px;height:2px;background:#777;"></div>
<div class="a" style="left:1121.0px;top:274px;width:1px;height:21px;background:#6a6a6a;"></div>
<div class="t" style="left:1123.0px;top:276.3px;font-size:10.5px;font-weight:bold;color:#eeeeee;">30</div>
<div class="a" style="left:1132.8px;top:292px;width:1px;height:2px;background:#777;"></div>
<div class="a" style="left:1144.7px;top:292px;width:1px;height:2px;background:#777;"></div>
<div class="a" style="left:1156.5px;top:289px;width:1px;height:5px;background:#777;"></div>
<div class="a" style="left:1168.4px;top:292px;width:1px;height:2px;background:#777;"></div>
<div class="a" style="left:1180.2px;top:292px;width:1px;height:2px;background:#777;"></div>
<div class="a" style="left:1192.1px;top:274px;width:1px;height:21px;background:#6a6a6a;"></div>
<div class="t" style="left:1194.1px;top:276.3px;font-size:10.5px;font-weight:bold;color:#eeeeee;">36</div>
<div class="a" style="left:1203.9px;top:292px;width:1px;height:2px;background:#777;"></div>
<div class="a" style="left:1215.8px;top:292px;width:1px;height:2px;background:#777;"></div>
<div class="a" style="left:1227.6px;top:289px;width:1px;height:5px;background:#777;"></div>
<div class="a" style="left:1239.5px;top:292px;width:1px;height:2px;background:#777;"></div>
<div class="a" style="left:1251.3px;top:292px;width:1px;height:2px;background:#777;"></div>
<div class="a" style="left:1263.2px;top:274px;width:1px;height:21px;background:#6a6a6a;"></div>
<div class="t" style="left:1265.2px;top:276.3px;font-size:10.5px;font-weight:bold;color:#eeeeee;">42</div>
<div class="a" style="left:1275.0px;top:292px;width:1px;height:2px;background:#777;"></div>
<div class="a" style="left:1286.9px;top:292px;width:1px;height:2px;background:#777;"></div>
<div class="a" style="left:1298.7px;top:289px;width:1px;height:5px;background:#777;"></div>
<div class="a" style="left:1310.6px;top:292px;width:1px;height:2px;background:#777;"></div>
<div class="a" style="left:1322.4px;top:292px;width:1px;height:2px;background:#777;"></div>
<div class="a" style="left:1334.3px;top:274px;width:1px;height:21px;background:#6a6a6a;"></div>
<div class="t" style="left:1336.3px;top:276.3px;font-size:10.5px;font-weight:bold;color:#eeeeee;">48</div>
<div class="a" style="left:1346.1px;top:292px;width:1px;height:2px;background:#777;"></div>
<div class="a" style="left:1358.0px;top:292px;width:1px;height:2px;background:#777;"></div>
<div class="a" style="left:1369.8px;top:289px;width:1px;height:5px;background:#777;"></div>
<div class="a" style="left:1381.7px;top:292px;width:1px;height:2px;background:#777;"></div>
<div class="a" style="left:1393.5px;top:292px;width:1px;height:2px;background:#777;"></div>
<div class="a" style="left:1405.4px;top:274px;width:1px;height:21px;background:#6a6a6a;"></div>
<div class="t" style="left:1407.4px;top:276.3px;font-size:10.5px;font-weight:bold;color:#eeeeee;">54</div>
<div class="a" style="left:1417.2px;top:292px;width:1px;height:2px;background:#777;"></div>
<div class="a" style="left:1429.1px;top:292px;width:1px;height:2px;background:#777;"></div>
<div class="a" style="left:1441.0px;top:289px;width:1px;height:5px;background:#777;"></div>
<div class="a" style="left:1452.8px;top:292px;width:1px;height:2px;background:#777;"></div>
<div class="a" style="left:1464.7px;top:292px;width:1px;height:2px;background:#777;"></div>
<div class="t" style="right:703.7px;top:322.4px;font-size:12.5px;font-weight:bold;color:#e8e8e8;">X:</div>
<div class="t" style="right:703.7px;top:349.1px;font-size:12.5px;font-weight:bold;color:#e8e8e8;">Leader:</div>
<div class="t" style="right:703.7px;top:377.1px;font-size:12.5px;font-weight:bold;color:#e8e8e8;">Align On:</div>
<div class="a" style="left:838px;top:316px;width:85px;height:23px;background:#484848;border:1px solid #606060;border-radius:3px"></div>
<div class="a" style="left:857px;top:317px;width:1px;height:21px;background:#5e5e5e;"></div>
<svg class="a" style="left:842px;top:318px" width="12" height="19"><path d="M3 6 L6 3 L9 6" stroke="#ddd" stroke-width="1.1" fill="none"/><path d="M3 12.5 L6 15.5 L9 12.5" stroke="#ddd" stroke-width="1.1" fill="none"/></svg>
<div class="t" style="left:863.5px;top:322.4px;font-size:12.5px;font-weight:bold;color:#f0f0f0;">7p7</div>
<div class="a" style="left:838px;top:343.5px;width:85.5px;height:22.5px;background:#fff;border:2px solid #3d85d8;border-radius:3px"></div>
<div class="a" style="left:844px;top:347px;width:8px;height:16px;background:#b2d2fb;"></div>
<div class="a" style="left:846px;top:359px;width:1.5px;height:1.5px;background:#444;"></div>
<div class="a" style="left:838px;top:371px;width:85px;height:22px;background:#575757;border-radius:2px"></div>
<div class="a" style="left:944.5px;top:316px;width:95.5px;height:28px;border:1.6px solid #d0d0d0;border-radius:14.0px"></div><div class="t" style="left:692.2px;width:600px;text-align:center;top:325.1px;font-size:12.5px;font-weight:bold;color:#f0f0f0;">Repeat</div>
<div class="a" style="left:1049.8px;top:316px;width:95.2px;height:28px;border:1.6px solid #d0d0d0;border-radius:14.0px"></div><div class="t" style="left:797.4px;width:600px;text-align:center;top:325.1px;font-size:12.5px;font-weight:bold;color:#f0f0f0;">Clear All</div>
<div class="a" style="left:1280px;top:785px;width:101px;height:28px;border:1.6px solid #d0d0d0;border-radius:14.0px"></div><div class="t" style="left:1030.5px;width:600px;text-align:center;top:794.0px;font-size:12.5px;font-weight:bold;color:#f0f0f0;">Cancel</div>
<div class="a" style="left:1390.7px;top:785px;width:100.3px;height:28px;border:2.4px solid #f4f4f4;border-radius:14.0px"></div><div class="t" style="left:1140.9px;width:600px;text-align:center;top:794.0px;font-size:12.5px;font-weight:bold;color:#f0f0f0;">OK</div>
<div class="a" style="left:557.5px;top:789.5px;width:12.5px;height:12.5px;background:#d0d0d0;border-radius:2px"></div>
<svg class="a" style="left:557px;top:789px" width="13" height="13"><path d="M3 6.5 L5.5 9 L10 4" stroke="#555" stroke-width="1.5" fill="none"/></svg>
<div class="t" style="left:576.5px;top:790.4px;font-size:12.5px;font-weight:bold;color:#f0f0f0;">Preview</div>
</body></html>
